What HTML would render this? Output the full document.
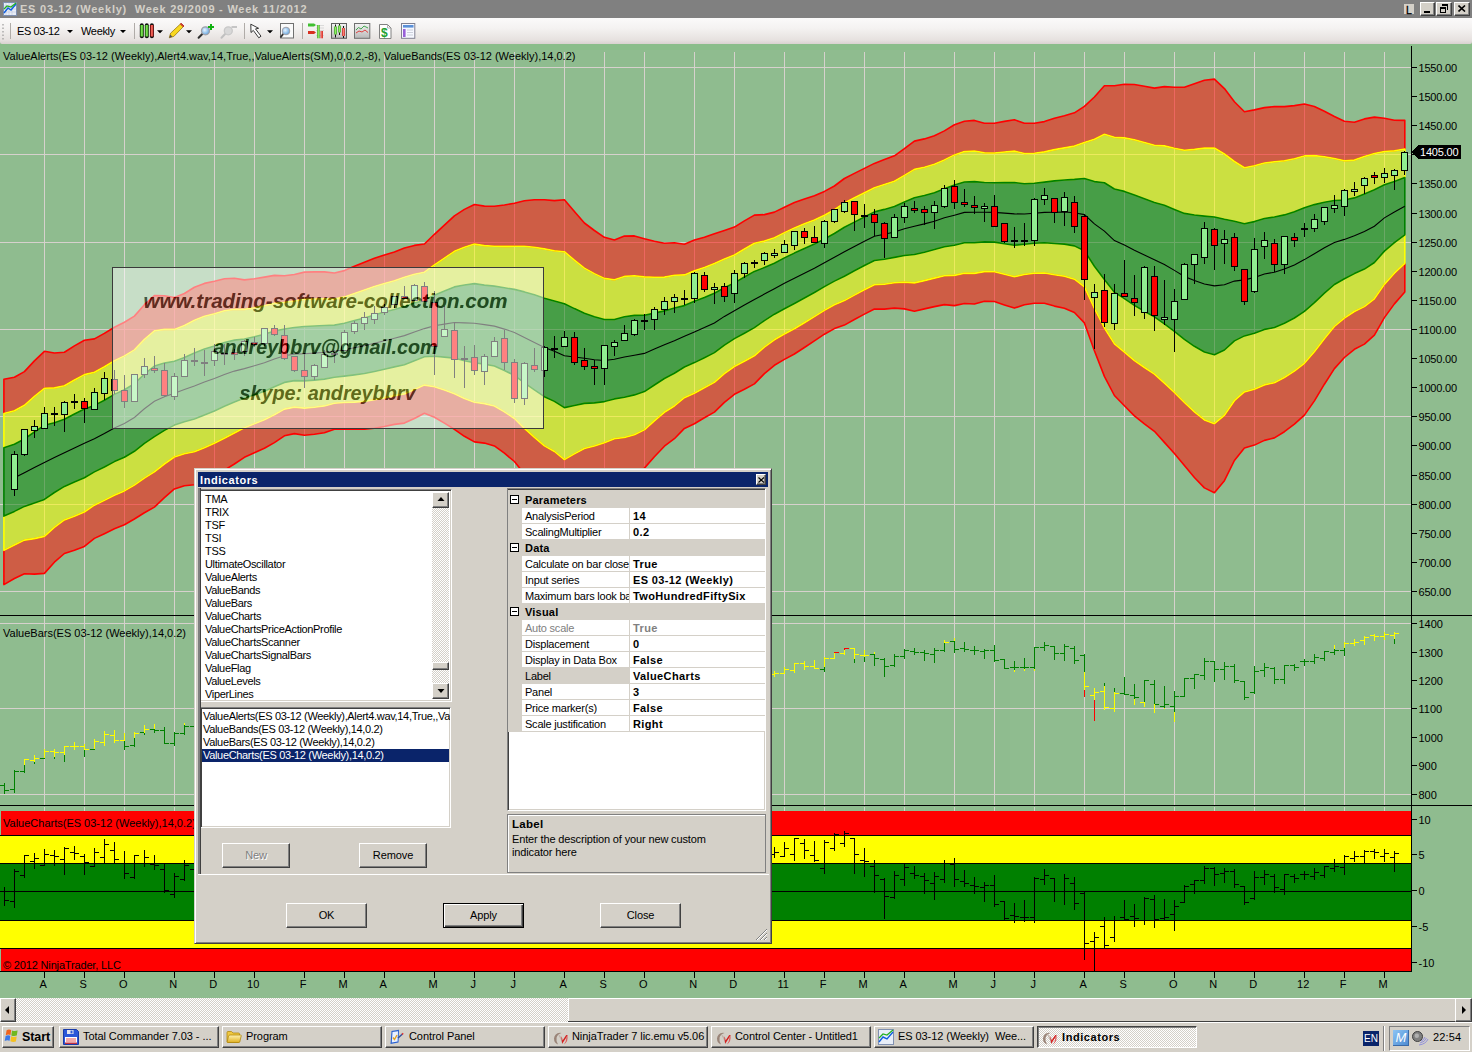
<!DOCTYPE html><html><head><meta charset="utf-8"><style>
*{margin:0;padding:0;box-sizing:border-box}
html,body{width:1472px;height:1052px;overflow:hidden;background:#8FBC8F;font-family:"Liberation Sans",sans-serif;font-size:11px;color:#000}
.a{position:absolute}
#title{left:0;top:0;width:1472px;height:18px;background:#808080}
#title .t{left:20px;top:2px;font-weight:bold;font-size:11px;line-height:14px;color:#D4D0C8;white-space:nowrap;letter-spacing:0.77px}
.cb{background:#D4D0C8;border-top:1px solid #fff;border-left:1px solid #fff;border-right:1px solid #404040;border-bottom:1px solid #404040;box-shadow:inset -1px -1px #808080}
#tb{left:0;top:18px;width:1472px;height:26px;background:linear-gradient(#fbfafa,#f4f2f1 40%,#e6e1df 85%,#d8d2cf);border-radius:0 0 2px 2px}
#sb{left:0;top:998px;width:1472px;height:24px;background-color:#eeece8;background-image:repeating-conic-gradient(#D4D0C8 0 25%,#fff 0 50%);background-size:2px 2px}
#task{left:0;top:1022px;width:1472px;height:30px;background:#D4D0C8;border-top:1px solid #fff}
.tbtn{top:3px;height:22px;background:#D4D0C8;border-top:1px solid #fff;border-left:1px solid #fff;border-right:1px solid #404040;border-bottom:1px solid #404040;box-shadow:inset -1px -1px #808080;white-space:nowrap;font-size:11px;padding:3px 0 0 23px;overflow:hidden;letter-spacing:-0.07px}
.tbtn.on{background-color:#eeece8;background-image:repeating-conic-gradient(#D4D0C8 0 25%,#fff 0 50%);background-size:2px 2px;border-top:1px solid #404040;border-left:1px solid #404040;border-right:1px solid #fff;border-bottom:1px solid #fff;box-shadow:inset 1px 1px #808080;font-weight:bold;letter-spacing:0.57px;padding-top:4px;padding-left:24px}
#dlg{left:194px;top:468px;width:578px;height:476px;background:#D4D0C8;border-top:1px solid #D4D0C8;border-left:1px solid #D4D0C8;border-right:1px solid #404040;border-bottom:1px solid #404040;box-shadow:inset 1px 1px #fff,inset -1px -1px #808080}
.sunk{border-top:1px solid #808080;border-left:1px solid #808080;border-right:1px solid #fff;border-bottom:1px solid #fff;box-shadow:inset 1px 1px #404040,inset -1px -1px #D4D0C8}
.btn{background:#D4D0C8;border-top:1px solid #fff;border-left:1px solid #fff;border-right:1px solid #404040;border-bottom:1px solid #404040;box-shadow:inset -1px -1px #808080;text-align:center;font-size:11px;line-height:22px;letter-spacing:-0.1px}
.li{position:absolute;left:4px;white-space:nowrap;font-size:11px;line-height:13px;height:13px;letter-spacing:-0.33px}
.pr{position:absolute;left:0;width:258px;height:16px;font-size:11px;line-height:16px;white-space:nowrap;letter-spacing:-0.22px}
.pr b{letter-spacing:0.2px}
</style></head><body><svg width="1472" height="1052" viewBox="0 0 1472 1052" style="position:absolute;left:0;top:0" shape-rendering="crispEdges"><defs><mask id="wm"><rect x="0" y="0" width="1472" height="1052" fill="white"/><g font-family="Liberation Sans" font-weight="bold" font-style="italic" fill="black"><text x="143.5" y="308" font-size="19.5" textLength="364" lengthAdjust="spacingAndGlyphs">www.trading-software-collection.com</text><text x="213.5" y="353.5" font-size="19.5" textLength="224" lengthAdjust="spacingAndGlyphs">andreybbrv@gmail.com</text><text x="239.5" y="399.5" font-size="19.5" textLength="176" lengthAdjust="spacingAndGlyphs">skype: andreybbrv</text></g></mask></defs><rect x="0" y="44" width="1472" height="954" fill="#8FBC8F"/><rect x="0" y="44" width="1472" height="6" fill="#8ABD8A"/><path d="M44.9 52V805M44.9 807V811M84.9 52V805M84.9 807V811M124.9 52V805M124.9 807V811M174.9 52V805M174.9 807V811M214.9 52V805M214.9 807V811M254.9 52V805M254.9 807V811M304.9 52V805M304.9 807V811M344.9 52V805M344.9 807V811M384.9 52V805M384.9 807V811M434.9 52V805M434.9 807V811M474.9 52V805M474.9 807V811M514.9 52V805M514.9 807V811M564.9 52V805M564.9 807V811M604.9 52V805M604.9 807V811M644.9 52V805M644.9 807V811M694.9 52V805M694.9 807V811M734.9 52V805M734.9 807V811M784.9 52V805M784.9 807V811M824.9 52V805M824.9 807V811M864.9 52V805M864.9 807V811M904.9 52V805M904.9 807V811M954.9 52V805M954.9 807V811M994.9 52V805M994.9 807V811M1034.9 52V805M1034.9 807V811M1084.9 52V805M1084.9 807V811M1124.9 52V805M1124.9 807V811M1174.9 52V805M1174.9 807V811M1214.9 52V805M1214.9 807V811M1254.9 52V805M1254.9 807V811M1304.9 52V805M1304.9 807V811M1344.9 52V805M1344.9 807V811M1384.9 52V805M1384.9 807V811M0 591.5H1411M0 504.5H1411M0 416.5H1411M0 329.5H1411M0 242.5H1411M0 154.5H1411M0 67.5H1411M0 623.5H1411M0 708.5H1411M0 794.5H1411" stroke="#D6D1CD" stroke-width="1" fill="none"/><g shape-rendering="geometricPrecision"><polygon points="3.9,379.2 14.4,377.2 24.4,371.6 34.4,360.9 44.4,351.3 54.4,353 64.4,352.2 74.4,345.9 84.4,340.3 94.4,338.9 104.4,333.4 114.4,327.2 124.4,322.2 134.4,316.1 144.4,304.7 154.4,295.5 164.4,295.8 174.4,297.5 184.4,293.5 194.4,287.3 204.4,283.4 214.4,281.3 224.4,278.8 234.4,278.2 244.4,279.9 254.4,278.8 264.4,277.1 274.4,275.4 284.4,275.7 294.4,274.5 304.4,272.1 314.4,271.9 324.4,271.9 334.4,273 344.4,270.6 354.4,266.2 364.4,262.2 374.4,258.3 384.4,254.9 394.4,251.9 404.4,248 414.4,245.4 424.4,244 434.4,234.3 444.4,225.1 454.4,215.8 464.4,209.4 474.4,204.5 484.4,206.1 494.4,206.2 504.4,205 514.4,203.3 524.4,200.8 534.4,199.8 544.4,199.7 554.4,200.6 564.4,199.7 574.4,211.6 584.4,223 594.4,230.5 604.4,237.3 614.4,240 624.4,236.1 634.4,235.9 644.4,238.7 654.4,241.2 664.4,243.2 674.4,242.7 684.4,244.2 694.4,240.1 704.4,237.3 714.4,233.7 724.4,230.4 734.4,227.1 744.4,220.9 754.4,215.1 764.4,214.6 774.4,212.1 784.4,207.2 794.4,202.6 804.4,199.1 814.4,195.8 824.4,191.4 834.4,186 844.4,178.5 854.4,173.4 864.4,168.4 874.4,163.4 884.4,159.6 894.4,155.8 904.4,148.7 914.4,141.1 924.4,138.9 934.4,135.7 944.4,130.9 954.4,124.8 964.4,121.2 974.4,120.4 984.4,123.2 994.4,123.3 1004.4,121.4 1014.4,119.7 1024.4,123.3 1034.4,123.3 1044.4,121.6 1054.4,118.3 1064.4,115.8 1074.4,112.8 1084.4,106.3 1094.4,97 1104.4,85.8 1114.4,85.7 1124.4,84.3 1134.4,84.5 1144.4,86.2 1154.4,88.1 1164.4,86.6 1174.4,87.3 1184.4,87.3 1194.4,83.8 1204.4,80.2 1214.4,79.1 1224.4,88.6 1234.4,101.7 1244.4,111.8 1254.4,109.9 1264.4,107.6 1274.4,106.6 1284.4,106.6 1294.4,105.6 1304.4,104 1314.4,106.5 1324.4,111.2 1334.4,116.5 1344.4,121.3 1354.4,122.2 1364.4,118.9 1374.4,117.1 1384.4,118.3 1394.4,120.2 1404.8,120.4 1404.8,149 1394.4,150.8 1384.4,151.5 1374.4,153.5 1364.4,156.5 1354.4,160.1 1344.4,160.7 1334.4,158.5 1324.4,156.7 1314.4,155.6 1304.4,155.9 1294.4,158.7 1284.4,160.8 1274.4,161.8 1264.4,163 1254.4,165.7 1244.4,167.8 1234.4,161.5 1224.4,154 1214.4,148 1204.4,148.1 1194.4,149.4 1184.4,150.3 1174.4,148.3 1164.4,145.9 1154.4,145.3 1144.4,142.5 1134.4,139.7 1124.4,137.9 1114.4,137.3 1104.4,134.3 1094.4,139.3 1084.4,142.4 1074.4,146.1 1064.4,147.9 1054.4,149.6 1044.4,151.9 1034.4,153.3 1024.4,153.5 1014.4,151.1 1004.4,152 994.4,153 984.4,152.8 974.4,151 964.4,151.6 954.4,154.9 944.4,159.9 934.4,164.2 924.4,167.2 914.4,169.4 904.4,175.4 894.4,181.2 884.4,184.5 874.4,187.7 864.4,192.7 854.4,197.7 844.4,202.9 834.4,209.7 824.4,215.2 814.4,220 804.4,223.8 794.4,227.9 784.4,232.6 774.4,237.7 764.4,241.1 754.4,243.2 744.4,249 734.4,255 724.4,259.1 714.4,263.4 704.4,267.4 694.4,270.7 684.4,274.9 674.4,275.3 664.4,277.1 654.4,277.2 644.4,276.9 634.4,275.7 624.4,276.4 614.4,279.7 604.4,278.4 594.4,273.6 584.4,268.1 574.4,260.1 564.4,251.7 554.4,250.8 544.4,248.9 534.4,247.3 524.4,246.3 514.4,246.3 504.4,246.4 494.4,246.2 484.4,245.6 474.4,244.1 464.4,247.2 454.4,251.3 444.4,258.1 434.4,264.8 424.4,272.2 414.4,274.3 404.4,277.2 394.4,280.7 384.4,283.5 374.4,286.6 364.4,290 354.4,293.4 344.4,296.9 334.4,299.1 324.4,298.7 314.4,299 304.4,299.3 294.4,301 284.4,302.3 274.4,303.2 264.4,305.7 254.4,307.8 244.4,309.4 234.4,309.2 224.4,310.7 214.4,313.7 204.4,316.3 194.4,320.2 184.4,325.5 174.4,329.4 164.4,329.4 154.4,330.8 144.4,339.4 134.4,349.9 124.4,355.9 114.4,360.8 104.4,366.8 94.4,372.2 84.4,374.6 74.4,380 64.4,385.8 54.4,387.9 44.4,388.3 34.4,396.4 24.4,405.3 14.4,410.7 3.9,413.4" fill="rgba(255,20,10,0.56)" stroke="#FF0000" stroke-width="1.6" stroke-linejoin="round"/><polygon points="3.9,550.4 14.4,545 24.4,540.1 34.4,538.6 44.4,536.4 54.4,527.4 64.4,519.9 74.4,516.2 84.4,512 94.4,505.2 104.4,500.4 114.4,495.2 124.4,490.9 134.4,485.1 144.4,478.1 154.4,471.9 164.4,464 174.4,457 184.4,453.7 194.4,451.8 204.4,447.8 214.4,443.3 224.4,438.2 234.4,433 244.4,427.7 254.4,423.7 264.4,419.8 274.4,414.7 284.4,409.1 294.4,407.1 304.4,408.1 314.4,407.2 324.4,405.9 334.4,403.3 344.4,402.5 354.4,402.1 364.4,401.4 374.4,399.8 384.4,397.9 394.4,395.6 404.4,393.9 414.4,389.6 424.4,385.1 434.4,386.8 444.4,390.1 454.4,393.7 464.4,398.5 474.4,402.3 484.4,403.6 494.4,406 504.4,411.9 514.4,418.5 524.4,428.4 534.4,437.4 544.4,445.9 554.4,451.5 564.4,459.6 574.4,453.9 584.4,448.5 594.4,446 604.4,442.7 614.4,438.7 624.4,437.5 634.4,434.7 644.4,429.9 654.4,420.9 664.4,412.3 674.4,406 684.4,397.7 694.4,393.2 704.4,387.7 714.4,382.4 724.4,373.7 734.4,366.5 744.4,361.3 754.4,355.8 764.4,347.1 774.4,339.8 784.4,334 794.4,328.7 804.4,322.8 814.4,316.6 824.4,310.4 834.4,304.8 844.4,300.6 854.4,295.1 864.4,289.8 874.4,284.7 884.4,284.2 894.4,282.7 904.4,282.2 914.4,282.9 924.4,280.6 934.4,278.1 944.4,275.7 954.4,275.4 964.4,273.2 974.4,273.4 984.4,271.6 994.4,271.8 1004.4,274.3 1014.4,276.7 1024.4,274.5 1034.4,273.3 1044.4,273 1054.4,274.8 1064.4,276.2 1074.4,279.2 1084.4,286.8 1094.4,308.5 1104.4,328 1114.4,343.9 1124.4,352.1 1134.4,360.7 1144.4,367.5 1154.4,374.1 1164.4,383.1 1174.4,392.5 1184.4,402.5 1194.4,411.9 1204.4,419.9 1214.4,423.7 1224.4,415.4 1234.4,400.7 1244.4,391.9 1254.4,389.2 1264.4,384.9 1274.4,382.7 1284.4,377.5 1294.4,371.1 1304.4,363.3 1314.4,351.8 1324.4,338.7 1334.4,326.5 1344.4,318.1 1354.4,311.5 1364.4,306.6 1374.4,298.8 1384.4,284.4 1394.4,273.2 1404.8,263.4 1404.8,292 1394.4,303.9 1384.4,317.6 1374.4,335.2 1364.4,344.1 1354.4,349.3 1344.4,357.5 1334.4,368.6 1324.4,384.2 1314.4,400.9 1304.4,415.1 1294.4,424.2 1284.4,431.7 1274.4,437.9 1264.4,440.4 1254.4,445.1 1244.4,448 1234.4,460.5 1224.4,480.7 1214.4,492.7 1204.4,487.9 1194.4,477.5 1184.4,465.5 1174.4,453.5 1164.4,442.4 1154.4,431.3 1144.4,423.8 1134.4,415.9 1124.4,405.7 1114.4,395.5 1104.4,376.4 1094.4,350.8 1084.4,322.9 1074.4,312.5 1064.4,308.3 1054.4,306.1 1044.4,303.3 1034.4,303.3 1024.4,304.7 1014.4,308.1 1004.4,304.9 994.4,301.5 984.4,301.2 974.4,304 964.4,303.5 954.4,305.6 944.4,304.6 934.4,306.6 924.4,308.9 914.4,311.2 904.4,308.9 894.4,308.1 884.4,309.1 874.4,309 864.4,314.1 854.4,319.5 844.4,325.1 834.4,328.6 824.4,334.2 814.4,340.8 804.4,347.5 794.4,354 784.4,359.4 774.4,365.3 764.4,373.6 754.4,383.9 744.4,389.3 734.4,394.3 724.4,402.4 714.4,412.1 704.4,417.8 694.4,423.8 684.4,428.4 674.4,438.7 664.4,446.2 654.4,456.8 644.4,468.1 634.4,474.5 624.4,477.8 614.4,478.4 604.4,483.8 594.4,489.1 584.4,493.6 574.4,502.4 564.4,511.6 554.4,501.7 544.4,495.2 534.4,485 524.4,473.9 514.4,461.5 504.4,453.2 494.4,445.9 484.4,443.1 474.4,441.9 464.4,436.3 454.4,429.3 444.4,423.1 434.4,417.3 424.4,413.3 414.4,418.5 404.4,423.1 394.4,424.4 384.4,426.5 374.4,428.2 364.4,429.2 354.4,429.2 344.4,428.9 334.4,429.3 324.4,432.8 314.4,434.2 304.4,435.2 294.4,433.6 284.4,435.8 274.4,442.6 264.4,448.3 254.4,452.7 244.4,457.3 234.4,464 224.4,470.1 214.4,475.7 204.4,480.6 194.4,484.7 184.4,485.7 174.4,488.9 164.4,497.7 154.4,507.1 144.4,512.8 134.4,519 124.4,524.7 114.4,528.8 104.4,533.7 94.4,538.4 84.4,546.4 74.4,550.3 64.4,553.5 54.4,562.2 44.4,573.4 34.4,574.1 24.4,573.8 14.4,578.5 3.9,584.6" fill="rgba(255,20,10,0.56)" stroke="#FF0000" stroke-width="1.6" stroke-linejoin="round"/><polygon points="3.9,413.4 14.4,410.7 24.4,405.3 34.4,396.4 44.4,388.3 54.4,387.9 64.4,385.8 74.4,380 84.4,374.6 94.4,372.2 104.4,366.8 114.4,360.8 124.4,355.9 134.4,349.9 144.4,339.4 154.4,330.8 164.4,329.4 174.4,329.4 184.4,325.5 194.4,320.2 204.4,316.3 214.4,313.7 224.4,310.7 234.4,309.2 244.4,309.4 254.4,307.8 264.4,305.7 274.4,303.2 284.4,302.3 294.4,301 304.4,299.3 314.4,299 324.4,298.7 334.4,299.1 344.4,296.9 354.4,293.4 364.4,290 374.4,286.6 384.4,283.5 394.4,280.7 404.4,277.2 414.4,274.3 424.4,272.2 434.4,264.8 444.4,258.1 454.4,251.3 464.4,247.2 474.4,244.1 484.4,245.6 494.4,246.2 504.4,246.4 514.4,246.3 524.4,246.3 534.4,247.3 544.4,248.9 554.4,250.8 564.4,251.7 574.4,260.1 584.4,268.1 594.4,273.6 604.4,278.4 614.4,279.7 624.4,276.4 634.4,275.7 644.4,276.9 654.4,277.2 664.4,277.1 674.4,275.3 684.4,274.9 694.4,270.7 704.4,267.4 714.4,263.4 724.4,259.1 734.4,255 744.4,249 754.4,243.2 764.4,241.1 774.4,237.7 784.4,232.6 794.4,227.9 804.4,223.8 814.4,220 824.4,215.2 834.4,209.7 844.4,202.9 854.4,197.7 864.4,192.7 874.4,187.7 884.4,184.5 894.4,181.2 904.4,175.4 914.4,169.4 924.4,167.2 934.4,164.2 944.4,159.9 954.4,154.9 964.4,151.6 974.4,151 984.4,152.8 994.4,153 1004.4,152 1014.4,151.1 1024.4,153.5 1034.4,153.3 1044.4,151.9 1054.4,149.6 1064.4,147.9 1074.4,146.1 1084.4,142.4 1094.4,139.3 1104.4,134.3 1114.4,137.3 1124.4,137.9 1134.4,139.7 1144.4,142.5 1154.4,145.3 1164.4,145.9 1174.4,148.3 1184.4,150.3 1194.4,149.4 1204.4,148.1 1214.4,148 1224.4,154 1234.4,161.5 1244.4,167.8 1254.4,165.7 1264.4,163 1274.4,161.8 1284.4,160.8 1294.4,158.7 1304.4,155.9 1314.4,155.6 1324.4,156.7 1334.4,158.5 1344.4,160.7 1354.4,160.1 1364.4,156.5 1374.4,153.5 1384.4,151.5 1394.4,150.8 1404.8,149 1404.8,177.6 1394.4,181.4 1384.4,184.7 1374.4,189.8 1364.4,194 1354.4,197.9 1344.4,200 1334.4,200.5 1324.4,202.2 1314.4,204.6 1304.4,207.7 1294.4,211.8 1284.4,214.9 1274.4,217 1264.4,218.5 1254.4,221.6 1244.4,223.8 1234.4,221.3 1224.4,219.3 1214.4,217 1204.4,216.1 1194.4,215 1184.4,213.4 1174.4,209.4 1164.4,205.2 1154.4,202.5 1144.4,198.7 1134.4,195 1124.4,191.4 1114.4,189 1104.4,182.7 1094.4,181.6 1084.4,178.5 1074.4,179.4 1064.4,180 1054.4,180.9 1044.4,182.1 1034.4,183.3 1024.4,183.8 1014.4,182.5 1004.4,182.6 994.4,182.7 984.4,182.5 974.4,181.6 964.4,182 954.4,185 944.4,188.8 934.4,192.7 924.4,195.5 914.4,197.8 904.4,202.1 894.4,206.6 884.4,209.4 874.4,211.9 864.4,217 854.4,222.1 844.4,227.3 834.4,233.5 824.4,239 814.4,244.1 804.4,248.6 794.4,253.1 784.4,257.9 774.4,263.2 764.4,267.6 754.4,271.4 744.4,277 734.4,282.9 724.4,287.7 714.4,293.2 704.4,297.5 694.4,301.3 684.4,305.6 674.4,308 664.4,310.9 654.4,313.1 644.4,315.2 634.4,315.4 624.4,316.7 614.4,319.5 604.4,319.5 594.4,316.7 584.4,313.2 574.4,308.6 564.4,303.7 554.4,301 544.4,298.2 534.4,294.8 524.4,291.9 514.4,289.4 504.4,287.8 494.4,286.1 484.4,285.1 474.4,283.6 464.4,285 454.4,286.9 444.4,291.1 434.4,295.3 424.4,300.4 414.4,303.1 404.4,306.4 394.4,309.4 384.4,312.1 374.4,314.9 364.4,317.9 354.4,320.5 344.4,323.3 334.4,325.1 324.4,325.5 314.4,326 304.4,326.5 294.4,327.5 284.4,329 274.4,331.1 264.4,334.2 254.4,336.8 244.4,339 234.4,340.1 224.4,342.6 214.4,346.1 204.4,349.1 194.4,353.1 184.4,357.6 174.4,361.3 164.4,363.1 154.4,366 144.4,374.1 134.4,383.7 124.4,389.7 114.4,394.4 104.4,400.2 94.4,405.4 84.4,409 74.4,414 64.4,419.3 54.4,422.7 44.4,425.3 34.4,432 24.4,439 14.4,444.3 3.9,447.7" fill="rgba(255,255,0,0.54)" stroke="#FFFF00" stroke-width="1.6" stroke-linejoin="round"/><polygon points="3.9,516.1 14.4,511.4 24.4,506.4 34.4,503 44.4,499.4 54.4,492.5 64.4,486.4 74.4,482.1 84.4,477.7 94.4,471.9 104.4,467 114.4,461.6 124.4,457.2 134.4,451.3 144.4,443.4 154.4,436.6 164.4,430.4 174.4,425.1 184.4,421.7 194.4,418.9 204.4,414.9 214.4,410.9 224.4,406.3 234.4,402.1 244.4,398.1 254.4,394.7 264.4,391.2 274.4,386.8 284.4,382.4 294.4,380.6 304.4,380.9 314.4,380.1 324.4,379.1 334.4,377.2 344.4,376.1 354.4,374.9 364.4,373.5 374.4,371.5 384.4,369.3 394.4,366.9 404.4,364.7 414.4,360.8 424.4,356.8 434.4,356.3 444.4,357.1 454.4,358.1 464.4,360.7 474.4,362.8 484.4,364.1 494.4,366 504.4,370.5 514.4,375.4 524.4,382.9 534.4,389.9 544.4,396.7 554.4,401.4 564.4,407.6 574.4,405.5 584.4,403.4 594.4,402.9 604.4,401.6 614.4,398.9 624.4,397.2 634.4,394.9 644.4,391.6 654.4,385 664.4,378.5 674.4,373.3 684.4,367 694.4,362.6 704.4,357.7 714.4,352.6 724.4,345.1 734.4,338.6 744.4,333.2 754.4,327.6 764.4,320.6 774.4,314.2 784.4,308.7 794.4,303.5 804.4,298 814.4,292.5 824.4,286.6 834.4,281.1 844.4,276.2 854.4,270.8 864.4,265.5 874.4,260.5 884.4,259.2 894.4,257.4 904.4,255.5 914.4,254.5 924.4,252.2 934.4,249.6 944.4,246.7 954.4,245.3 964.4,242.8 974.4,242.8 984.4,241.9 994.4,242.1 1004.4,243.7 1014.4,245.3 1024.4,244.2 1034.4,243.3 1044.4,242.7 1054.4,243.5 1064.4,244.1 1074.4,245.9 1084.4,250.7 1094.4,266.2 1104.4,279.6 1114.4,292.2 1124.4,298.6 1134.4,305.4 1144.4,311.3 1154.4,316.9 1164.4,323.8 1174.4,331.4 1184.4,339.4 1194.4,346.3 1204.4,352 1214.4,354.8 1224.4,350 1234.4,340.9 1244.4,335.9 1254.4,333.3 1264.4,329.4 1274.4,327.5 1284.4,323.3 1294.4,318 1304.4,311.4 1314.4,302.7 1324.4,293.2 1334.4,284.5 1344.4,278.7 1354.4,273.6 1364.4,269.1 1374.4,262.5 1384.4,251.1 1394.4,242.6 1404.8,234.8 1404.8,263.4 1394.4,273.2 1384.4,284.4 1374.4,298.8 1364.4,306.6 1354.4,311.5 1344.4,318.1 1334.4,326.5 1324.4,338.7 1314.4,351.8 1304.4,363.3 1294.4,371.1 1284.4,377.5 1274.4,382.7 1264.4,384.9 1254.4,389.2 1244.4,391.9 1234.4,400.7 1224.4,415.4 1214.4,423.7 1204.4,419.9 1194.4,411.9 1184.4,402.5 1174.4,392.5 1164.4,383.1 1154.4,374.1 1144.4,367.5 1134.4,360.7 1124.4,352.1 1114.4,343.9 1104.4,328 1094.4,308.5 1084.4,286.8 1074.4,279.2 1064.4,276.2 1054.4,274.8 1044.4,273 1034.4,273.3 1024.4,274.5 1014.4,276.7 1004.4,274.3 994.4,271.8 984.4,271.6 974.4,273.4 964.4,273.2 954.4,275.4 944.4,275.7 934.4,278.1 924.4,280.6 914.4,282.9 904.4,282.2 894.4,282.7 884.4,284.2 874.4,284.7 864.4,289.8 854.4,295.1 844.4,300.6 834.4,304.8 824.4,310.4 814.4,316.6 804.4,322.8 794.4,328.7 784.4,334 774.4,339.8 764.4,347.1 754.4,355.8 744.4,361.3 734.4,366.5 724.4,373.7 714.4,382.4 704.4,387.7 694.4,393.2 684.4,397.7 674.4,406 664.4,412.3 654.4,420.9 644.4,429.9 634.4,434.7 624.4,437.5 614.4,438.7 604.4,442.7 594.4,446 584.4,448.5 574.4,453.9 564.4,459.6 554.4,451.5 544.4,445.9 534.4,437.4 524.4,428.4 514.4,418.5 504.4,411.9 494.4,406 484.4,403.6 474.4,402.3 464.4,398.5 454.4,393.7 444.4,390.1 434.4,386.8 424.4,385.1 414.4,389.6 404.4,393.9 394.4,395.6 384.4,397.9 374.4,399.8 364.4,401.4 354.4,402.1 344.4,402.5 334.4,403.3 324.4,405.9 314.4,407.2 304.4,408.1 294.4,407.1 284.4,409.1 274.4,414.7 264.4,419.8 254.4,423.7 244.4,427.7 234.4,433 224.4,438.2 214.4,443.3 204.4,447.8 194.4,451.8 184.4,453.7 174.4,457 164.4,464 154.4,471.9 144.4,478.1 134.4,485.1 124.4,490.9 114.4,495.2 104.4,500.4 94.4,505.2 84.4,512 74.4,516.2 64.4,519.9 54.4,527.4 44.4,536.4 34.4,538.6 24.4,540.1 14.4,545 3.9,550.4" fill="rgba(255,255,0,0.54)" stroke="#FFFF00" stroke-width="1.6" stroke-linejoin="round"/><polygon points="3.9,447.7 14.4,444.3 24.4,439 34.4,432 44.4,425.3 54.4,422.7 64.4,419.3 74.4,414 84.4,409 94.4,405.4 104.4,400.2 114.4,394.4 124.4,389.7 134.4,383.7 144.4,374.1 154.4,366 164.4,363.1 174.4,361.3 184.4,357.6 194.4,353.1 204.4,349.1 214.4,346.1 224.4,342.6 234.4,340.1 244.4,339 254.4,336.8 264.4,334.2 274.4,331.1 284.4,329 294.4,327.5 304.4,326.5 314.4,326 324.4,325.5 334.4,325.1 344.4,323.3 354.4,320.5 364.4,317.9 374.4,314.9 384.4,312.1 394.4,309.4 404.4,306.4 414.4,303.1 424.4,300.4 434.4,295.3 444.4,291.1 454.4,286.9 464.4,285 474.4,283.6 484.4,285.1 494.4,286.1 504.4,287.8 514.4,289.4 524.4,291.9 534.4,294.8 544.4,298.2 554.4,301 564.4,303.7 574.4,308.6 584.4,313.2 594.4,316.7 604.4,319.5 614.4,319.5 624.4,316.7 634.4,315.4 644.4,315.2 654.4,313.1 664.4,310.9 674.4,308 684.4,305.6 694.4,301.3 704.4,297.5 714.4,293.2 724.4,287.7 734.4,282.9 744.4,277 754.4,271.4 764.4,267.6 774.4,263.2 784.4,257.9 794.4,253.1 804.4,248.6 814.4,244.1 824.4,239 834.4,233.5 844.4,227.3 854.4,222.1 864.4,217 874.4,211.9 884.4,209.4 894.4,206.6 904.4,202.1 914.4,197.8 924.4,195.5 934.4,192.7 944.4,188.8 954.4,185 964.4,182 974.4,181.6 984.4,182.5 994.4,182.7 1004.4,182.6 1014.4,182.5 1024.4,183.8 1034.4,183.3 1044.4,182.1 1054.4,180.9 1064.4,180 1074.4,179.4 1084.4,178.5 1094.4,181.6 1104.4,182.7 1114.4,189 1124.4,191.4 1134.4,195 1144.4,198.7 1154.4,202.5 1164.4,205.2 1174.4,209.4 1184.4,213.4 1194.4,215 1204.4,216.1 1214.4,217 1224.4,219.3 1234.4,221.3 1244.4,223.8 1254.4,221.6 1264.4,218.5 1274.4,217 1284.4,214.9 1294.4,211.8 1304.4,207.7 1314.4,204.6 1324.4,202.2 1334.4,200.5 1344.4,200 1354.4,197.9 1364.4,194 1374.4,189.8 1384.4,184.7 1394.4,181.4 1404.8,177.6 1404.8,234.8 1394.4,242.6 1384.4,251.1 1374.4,262.5 1364.4,269.1 1354.4,273.6 1344.4,278.7 1334.4,284.5 1324.4,293.2 1314.4,302.7 1304.4,311.4 1294.4,318 1284.4,323.3 1274.4,327.5 1264.4,329.4 1254.4,333.3 1244.4,335.9 1234.4,340.9 1224.4,350 1214.4,354.8 1204.4,352 1194.4,346.3 1184.4,339.4 1174.4,331.4 1164.4,323.8 1154.4,316.9 1144.4,311.3 1134.4,305.4 1124.4,298.6 1114.4,292.2 1104.4,279.6 1094.4,266.2 1084.4,250.7 1074.4,245.9 1064.4,244.1 1054.4,243.5 1044.4,242.7 1034.4,243.3 1024.4,244.2 1014.4,245.3 1004.4,243.7 994.4,242.1 984.4,241.9 974.4,242.8 964.4,242.8 954.4,245.3 944.4,246.7 934.4,249.6 924.4,252.2 914.4,254.5 904.4,255.5 894.4,257.4 884.4,259.2 874.4,260.5 864.4,265.5 854.4,270.8 844.4,276.2 834.4,281.1 824.4,286.6 814.4,292.5 804.4,298 794.4,303.5 784.4,308.7 774.4,314.2 764.4,320.6 754.4,327.6 744.4,333.2 734.4,338.6 724.4,345.1 714.4,352.6 704.4,357.7 694.4,362.6 684.4,367 674.4,373.3 664.4,378.5 654.4,385 644.4,391.6 634.4,394.9 624.4,397.2 614.4,398.9 604.4,401.6 594.4,402.9 584.4,403.4 574.4,405.5 564.4,407.6 554.4,401.4 544.4,396.7 534.4,389.9 524.4,382.9 514.4,375.4 504.4,370.5 494.4,366 484.4,364.1 474.4,362.8 464.4,360.7 454.4,358.1 444.4,357.1 434.4,356.3 424.4,356.8 414.4,360.8 404.4,364.7 394.4,366.9 384.4,369.3 374.4,371.5 364.4,373.5 354.4,374.9 344.4,376.1 334.4,377.2 324.4,379.1 314.4,380.1 304.4,380.9 294.4,380.6 284.4,382.4 274.4,386.8 264.4,391.2 254.4,394.7 244.4,398.1 234.4,402.1 224.4,406.3 214.4,410.9 204.4,414.9 194.4,418.9 184.4,421.7 174.4,425.1 164.4,430.4 154.4,436.6 144.4,443.4 134.4,451.3 124.4,457.2 114.4,461.6 104.4,467 94.4,471.9 84.4,477.7 74.4,482.1 64.4,486.4 54.4,492.5 44.4,499.4 34.4,503 24.4,506.4 14.4,511.4 3.9,516.1" fill="rgba(0,128,0,0.5)" stroke="#008000" stroke-width="1.6" stroke-linejoin="round"/><polyline points="14.4,477.8 24.4,472.7 34.4,467.5 44.4,462.4 54.4,457.6 64.4,452.8 74.4,448.1 84.4,443.3 94.4,438.7 104.4,433.6 114.4,428 124.4,423.4 134.4,417.5 144.4,408.8 154.4,401.3 164.4,396.7 174.4,393.2 184.4,389.6 194.4,386 204.4,382 214.4,378.5 224.4,374.5 234.4,371.1 244.4,368.6 254.4,365.7 264.4,362.7 274.4,359 284.4,355.7 294.4,354.1 304.4,353.7 314.4,353.1 324.4,352.3 334.4,351.2 344.4,349.7 354.4,347.7 364.4,345.7 374.4,343.2 384.4,340.7 394.4,338.2 404.4,335.6 414.4,331.9 424.4,328.6 434.4,325.8 444.4,324.1 454.4,322.5 464.4,322.9 474.4,323.2 484.4,324.6 494.4,326.1 504.4,329.1 514.4,332.4 524.4,337.4 534.4,342.4 544.4,347.4 554.4,351.2 564.4,355.7 574.4,357 584.4,358.3 594.4,359.8 604.4,360.5 614.4,359.2 624.4,357 634.4,355.2 644.4,353.4 654.4,349 664.4,344.7 674.4,340.7 684.4,336.3 694.4,332 704.4,327.6 714.4,322.9 724.4,316.4 734.4,310.7 744.4,305.1 754.4,299.5 764.4,294.1 774.4,288.7 784.4,283.3 794.4,278.3 804.4,273.3 814.4,268.3 824.4,262.8 834.4,257.3 844.4,251.8 854.4,246.4 864.4,241.3 874.4,236.2 884.4,234.3 894.4,232 904.4,228.8 914.4,226.2 924.4,223.9 934.4,221.2 944.4,217.8 954.4,215.2 964.4,212.4 974.4,212.2 984.4,212.2 994.4,212.4 1004.4,213.1 1014.4,213.9 1024.4,214 1034.4,213.3 1044.4,212.4 1054.4,212.2 1064.4,212 1074.4,212.7 1084.4,214.6 1094.4,223.9 1104.4,231.1 1114.4,240.6 1124.4,245 1134.4,250.2 1144.4,255 1154.4,259.7 1164.4,264.5 1174.4,270.4 1184.4,276.4 1194.4,280.6 1204.4,284 1214.4,285.9 1224.4,284.7 1234.4,281.1 1244.4,279.9 1254.4,277.5 1264.4,274 1274.4,272.2 1284.4,269.1 1294.4,264.9 1304.4,259.6 1314.4,253.7 1324.4,247.7 1334.4,242.5 1344.4,239.4 1354.4,235.8 1364.4,231.5 1374.4,226.2 1384.4,217.9 1394.4,212 1404.8,206.2" fill="none" stroke="#000" stroke-width="1.1"/></g><path d="M14.5 451V496M24.5 429V456M34.5 420V438M44.5 407V428M54.5 407V426M64.5 401V432M74.5 394V409M84.5 398V423M94.5 388V409M104.5 372V400M114.5 370V394M124.5 375V408M134.5 374V402M144.5 358V378M154.5 356V373M164.5 363V397M174.5 373V400M184.5 354V377M194.5 348V366M204.5 350V376M214.5 344V366M224.5 344V365M234.5 349V360M244.5 340V356M254.5 337V347M264.5 328V346M274.5 325V336M284.5 325V360M294.5 356V372M304.5 353V388M314.5 364V380M324.5 350V368M334.5 350V363M344.5 330V350M354.5 321V334M364.5 312V330M374.5 306V324M384.5 304V315M394.5 296V308M404.5 286V298M414.5 284V300M424.5 282V301M434.5 291V375M444.5 306V337M454.5 323V378M464.5 346V388M474.5 345V375M484.5 354V385M494.5 337V356M504.5 330V370M514.5 359V403M524.5 362V405M534.5 348V372M544.5 346V377M554.5 336V358M564.5 331V346M574.5 332V365M584.5 348V370M594.5 360V385M604.5 345V385M614.5 340V356M624.5 325V340M634.5 319V336M644.5 314V330M654.5 307V330M664.5 297V315M674.5 294V313M684.5 290V305M694.5 272V303M704.5 272V292M714.5 283V304M724.5 283V302M734.5 270V303M744.5 262V278M754.5 260V268M764.5 252V265M774.5 249V258M784.5 240V252M794.5 231V250M804.5 228V244M814.5 226V243M824.5 220V248M834.5 209V223M844.5 200V213M854.5 201V231M864.5 204V228M874.5 209V236M884.5 222V258M894.5 214V238M904.5 203V223M914.5 201V213M924.5 206V225M934.5 201V229M944.5 185V208M954.5 180V209M964.5 189V207M974.5 196V214M984.5 203V222M994.5 195V227M1004.5 223V243M1014.5 227V248M1024.5 223V246M1034.5 198V246M1044.5 188V205M1054.5 198V223M1064.5 192V226M1074.5 196V233M1084.5 214V300M1094.5 284V349M1104.5 274V327M1114.5 284V330M1124.5 260V296M1134.5 275V316M1144.5 266V319M1154.5 266V331M1164.5 280V325M1174.5 289V352M1184.5 263V299M1194.5 254V284M1204.5 222V264M1214.5 228V270M1224.5 230V264M1234.5 233V271M1244.5 269V305M1254.5 238V293M1264.5 232V259M1274.5 239V272M1284.5 236V274M1294.5 233V247M1304.5 223V237M1314.5 214V232M1324.5 207V225M1334.5 195V213M1344.5 189V216M1354.5 182V196M1364.5 177V194M1374.5 172V184M1384.5 168V183M1394.5 169V190M1404.5 151V175" stroke="#000" stroke-width="1" fill="none"/><rect x="11.5" y="454.5" width="6" height="35" fill="#90EE90" stroke="#000" stroke-width="1"/><rect x="21.5" y="429.5" width="6" height="25" fill="#90EE90" stroke="#000" stroke-width="1"/><rect x="31.5" y="426.5" width="6" height="4" fill="#90EE90" stroke="#000" stroke-width="1"/><rect x="41.5" y="413.5" width="6" height="15" fill="#90EE90" stroke="#000" stroke-width="1"/><path d="M51 413.5H58" stroke="#000" stroke-width="2"/><rect x="61.5" y="402.5" width="6" height="12" fill="#90EE90" stroke="#000" stroke-width="1"/><path d="M71 401.5H78" stroke="#000" stroke-width="2"/><rect x="81.5" y="401.5" width="6" height="7" fill="#FF0000" stroke="#000" stroke-width="1"/><rect x="91.5" y="392.5" width="6" height="17" fill="#90EE90" stroke="#000" stroke-width="1"/><rect x="101.5" y="378.5" width="6" height="15" fill="#90EE90" stroke="#000" stroke-width="1"/><rect x="111.5" y="379.5" width="6" height="11" fill="#FF0000" stroke="#000" stroke-width="1"/><rect x="121.5" y="390.5" width="6" height="11" fill="#FF0000" stroke="#000" stroke-width="1"/><rect x="131.5" y="374.5" width="6" height="27" fill="#90EE90" stroke="#000" stroke-width="1"/><rect x="141.5" y="366.5" width="6" height="8" fill="#90EE90" stroke="#000" stroke-width="1"/><rect x="151.5" y="368.5" width="6" height="2" fill="#FF0000" stroke="#000" stroke-width="1"/><rect x="161.5" y="370.5" width="6" height="25" fill="#FF0000" stroke="#000" stroke-width="1"/><rect x="171.5" y="376.5" width="6" height="20" fill="#90EE90" stroke="#000" stroke-width="1"/><rect x="181.5" y="360.5" width="6" height="16" fill="#90EE90" stroke="#000" stroke-width="1"/><path d="M191 360.5H198" stroke="#000" stroke-width="2"/><path d="M201 362.5H208" stroke="#000" stroke-width="2"/><rect x="211.5" y="351.5" width="6" height="9" fill="#90EE90" stroke="#000" stroke-width="1"/><path d="M221 353.5H228" stroke="#000" stroke-width="2"/><rect x="231.5" y="352.5" width="6" height="2" fill="#FF0000" stroke="#000" stroke-width="1"/><rect x="241.5" y="341.5" width="6" height="10" fill="#90EE90" stroke="#000" stroke-width="1"/><rect x="251.5" y="342.5" width="6" height="2" fill="#FF0000" stroke="#000" stroke-width="1"/><rect x="261.5" y="328.5" width="6" height="15" fill="#90EE90" stroke="#000" stroke-width="1"/><rect x="271.5" y="328.5" width="6" height="6" fill="#FF0000" stroke="#000" stroke-width="1"/><rect x="281.5" y="335.5" width="6" height="23" fill="#FF0000" stroke="#000" stroke-width="1"/><rect x="291.5" y="356.5" width="6" height="14" fill="#FF0000" stroke="#000" stroke-width="1"/><rect x="301.5" y="370.5" width="6" height="6" fill="#FF0000" stroke="#000" stroke-width="1"/><rect x="311.5" y="365.5" width="6" height="11" fill="#90EE90" stroke="#000" stroke-width="1"/><rect x="321.5" y="354.5" width="6" height="13" fill="#90EE90" stroke="#000" stroke-width="1"/><path d="M331 353.5H338" stroke="#000" stroke-width="2"/><rect x="341.5" y="332.5" width="6" height="18" fill="#90EE90" stroke="#000" stroke-width="1"/><rect x="351.5" y="323.5" width="6" height="8" fill="#90EE90" stroke="#000" stroke-width="1"/><rect x="361.5" y="317.5" width="6" height="6" fill="#90EE90" stroke="#000" stroke-width="1"/><rect x="371.5" y="313.5" width="6" height="6" fill="#90EE90" stroke="#000" stroke-width="1"/><rect x="381.5" y="307.5" width="6" height="5" fill="#90EE90" stroke="#000" stroke-width="1"/><rect x="391.5" y="296.5" width="6" height="8" fill="#90EE90" stroke="#000" stroke-width="1"/><rect x="401.5" y="296.5" width="6" height="2" fill="#FF0000" stroke="#000" stroke-width="1"/><rect x="411.5" y="285.5" width="6" height="15" fill="#90EE90" stroke="#000" stroke-width="1"/><rect x="421.5" y="286.5" width="6" height="15" fill="#FF0000" stroke="#000" stroke-width="1"/><rect x="431.5" y="302.5" width="6" height="44" fill="#FF0000" stroke="#000" stroke-width="1"/><rect x="441.5" y="329.5" width="6" height="7" fill="#90EE90" stroke="#000" stroke-width="1"/><rect x="451.5" y="330.5" width="6" height="29" fill="#FF0000" stroke="#000" stroke-width="1"/><path d="M461 358.5H468" stroke="#000" stroke-width="2"/><rect x="471.5" y="357.5" width="6" height="13" fill="#FF0000" stroke="#000" stroke-width="1"/><rect x="481.5" y="356.5" width="6" height="15" fill="#90EE90" stroke="#000" stroke-width="1"/><rect x="491.5" y="341.5" width="6" height="15" fill="#90EE90" stroke="#000" stroke-width="1"/><rect x="501.5" y="338.5" width="6" height="24" fill="#FF0000" stroke="#000" stroke-width="1"/><rect x="511.5" y="362.5" width="6" height="36" fill="#FF0000" stroke="#000" stroke-width="1"/><rect x="521.5" y="363.5" width="6" height="35" fill="#90EE90" stroke="#000" stroke-width="1"/><rect x="531.5" y="365.5" width="6" height="4" fill="#FF0000" stroke="#000" stroke-width="1"/><rect x="541.5" y="347.5" width="6" height="23" fill="#90EE90" stroke="#000" stroke-width="1"/><path d="M551 348.5H558" stroke="#000" stroke-width="2"/><rect x="561.5" y="337.5" width="6" height="9" fill="#90EE90" stroke="#000" stroke-width="1"/><rect x="571.5" y="337.5" width="6" height="25" fill="#FF0000" stroke="#000" stroke-width="1"/><rect x="581.5" y="360.5" width="6" height="6" fill="#FF0000" stroke="#000" stroke-width="1"/><rect x="591.5" y="366.5" width="6" height="2" fill="#FF0000" stroke="#000" stroke-width="1"/><rect x="601.5" y="345.5" width="6" height="23" fill="#90EE90" stroke="#000" stroke-width="1"/><rect x="611.5" y="342.5" width="6" height="4" fill="#90EE90" stroke="#000" stroke-width="1"/><rect x="621.5" y="333.5" width="6" height="7" fill="#90EE90" stroke="#000" stroke-width="1"/><rect x="631.5" y="320.5" width="6" height="14" fill="#90EE90" stroke="#000" stroke-width="1"/><path d="M641 320.5H648" stroke="#000" stroke-width="2"/><rect x="651.5" y="309.5" width="6" height="10" fill="#90EE90" stroke="#000" stroke-width="1"/><rect x="661.5" y="301.5" width="6" height="8" fill="#90EE90" stroke="#000" stroke-width="1"/><rect x="671.5" y="297.5" width="6" height="4" fill="#90EE90" stroke="#000" stroke-width="1"/><path d="M681 298.5H688" stroke="#000" stroke-width="2"/><rect x="691.5" y="273.5" width="6" height="25" fill="#90EE90" stroke="#000" stroke-width="1"/><rect x="701.5" y="275.5" width="6" height="14" fill="#FF0000" stroke="#000" stroke-width="1"/><rect x="711.5" y="287.5" width="6" height="2" fill="#90EE90" stroke="#000" stroke-width="1"/><rect x="721.5" y="286.5" width="6" height="10" fill="#FF0000" stroke="#000" stroke-width="1"/><rect x="731.5" y="273.5" width="6" height="20" fill="#90EE90" stroke="#000" stroke-width="1"/><rect x="741.5" y="263.5" width="6" height="10" fill="#90EE90" stroke="#000" stroke-width="1"/><path d="M751 262.5H758" stroke="#000" stroke-width="2"/><rect x="761.5" y="253.5" width="6" height="7" fill="#90EE90" stroke="#000" stroke-width="1"/><rect x="771.5" y="253.5" width="6" height="2" fill="#90EE90" stroke="#000" stroke-width="1"/><rect x="781.5" y="244.5" width="6" height="8" fill="#90EE90" stroke="#000" stroke-width="1"/><rect x="791.5" y="231.5" width="6" height="14" fill="#90EE90" stroke="#000" stroke-width="1"/><rect x="801.5" y="231.5" width="6" height="6" fill="#FF0000" stroke="#000" stroke-width="1"/><rect x="811.5" y="237.5" width="6" height="5" fill="#FF0000" stroke="#000" stroke-width="1"/><rect x="821.5" y="221.5" width="6" height="22" fill="#90EE90" stroke="#000" stroke-width="1"/><rect x="831.5" y="209.5" width="6" height="12" fill="#90EE90" stroke="#000" stroke-width="1"/><rect x="841.5" y="202.5" width="6" height="9" fill="#90EE90" stroke="#000" stroke-width="1"/><rect x="851.5" y="201.5" width="6" height="13" fill="#FF0000" stroke="#000" stroke-width="1"/><path d="M861 215.5H868" stroke="#000" stroke-width="2"/><rect x="871.5" y="214.5" width="6" height="8" fill="#FF0000" stroke="#000" stroke-width="1"/><rect x="881.5" y="223.5" width="6" height="15" fill="#FF0000" stroke="#000" stroke-width="1"/><rect x="891.5" y="217.5" width="6" height="20" fill="#90EE90" stroke="#000" stroke-width="1"/><rect x="901.5" y="206.5" width="6" height="11" fill="#90EE90" stroke="#000" stroke-width="1"/><rect x="911.5" y="208.5" width="6" height="2" fill="#FF0000" stroke="#000" stroke-width="1"/><rect x="921.5" y="209.5" width="6" height="3" fill="#FF0000" stroke="#000" stroke-width="1"/><rect x="931.5" y="205.5" width="6" height="7" fill="#90EE90" stroke="#000" stroke-width="1"/><rect x="941.5" y="188.5" width="6" height="18" fill="#90EE90" stroke="#000" stroke-width="1"/><rect x="951.5" y="186.5" width="6" height="16" fill="#FF0000" stroke="#000" stroke-width="1"/><rect x="961.5" y="202.5" width="6" height="2" fill="#FF0000" stroke="#000" stroke-width="1"/><rect x="971.5" y="205.5" width="6" height="2" fill="#FF0000" stroke="#000" stroke-width="1"/><rect x="981.5" y="206.5" width="6" height="2" fill="#90EE90" stroke="#000" stroke-width="1"/><rect x="991.5" y="206.5" width="6" height="20" fill="#FF0000" stroke="#000" stroke-width="1"/><rect x="1001.5" y="223.5" width="6" height="18" fill="#FF0000" stroke="#000" stroke-width="1"/><path d="M1011 240.5H1018" stroke="#000" stroke-width="2"/><path d="M1021 240.5H1028" stroke="#000" stroke-width="2"/><rect x="1031.5" y="199.5" width="6" height="41" fill="#90EE90" stroke="#000" stroke-width="1"/><rect x="1041.5" y="195.5" width="6" height="4" fill="#90EE90" stroke="#000" stroke-width="1"/><rect x="1051.5" y="198.5" width="6" height="14" fill="#FF0000" stroke="#000" stroke-width="1"/><rect x="1061.5" y="197.5" width="6" height="14" fill="#90EE90" stroke="#000" stroke-width="1"/><rect x="1071.5" y="202.5" width="6" height="24" fill="#FF0000" stroke="#000" stroke-width="1"/><rect x="1081.5" y="216.5" width="6" height="63" fill="#FF0000" stroke="#000" stroke-width="1"/><rect x="1091.5" y="292.5" width="6" height="5" fill="#90EE90" stroke="#000" stroke-width="1"/><rect x="1101.5" y="290.5" width="6" height="32" fill="#FF0000" stroke="#000" stroke-width="1"/><rect x="1111.5" y="293.5" width="6" height="30" fill="#90EE90" stroke="#000" stroke-width="1"/><rect x="1121.5" y="293.5" width="6" height="3" fill="#FF0000" stroke="#000" stroke-width="1"/><rect x="1131.5" y="298.5" width="6" height="4" fill="#FF0000" stroke="#000" stroke-width="1"/><rect x="1141.5" y="267.5" width="6" height="45" fill="#90EE90" stroke="#000" stroke-width="1"/><rect x="1151.5" y="276.5" width="6" height="39" fill="#FF0000" stroke="#000" stroke-width="1"/><rect x="1161.5" y="317.5" width="6" height="2" fill="#90EE90" stroke="#000" stroke-width="1"/><rect x="1171.5" y="301.5" width="6" height="18" fill="#90EE90" stroke="#000" stroke-width="1"/><rect x="1181.5" y="264.5" width="6" height="35" fill="#90EE90" stroke="#000" stroke-width="1"/><rect x="1191.5" y="254.5" width="6" height="10" fill="#90EE90" stroke="#000" stroke-width="1"/><rect x="1201.5" y="228.5" width="6" height="29" fill="#90EE90" stroke="#000" stroke-width="1"/><rect x="1211.5" y="229.5" width="6" height="16" fill="#FF0000" stroke="#000" stroke-width="1"/><rect x="1221.5" y="239.5" width="6" height="4" fill="#90EE90" stroke="#000" stroke-width="1"/><rect x="1231.5" y="237.5" width="6" height="29" fill="#FF0000" stroke="#000" stroke-width="1"/><rect x="1241.5" y="269.5" width="6" height="32" fill="#FF0000" stroke="#000" stroke-width="1"/><rect x="1251.5" y="249.5" width="6" height="42" fill="#90EE90" stroke="#000" stroke-width="1"/><rect x="1261.5" y="240.5" width="6" height="6" fill="#90EE90" stroke="#000" stroke-width="1"/><rect x="1271.5" y="243.5" width="6" height="21" fill="#FF0000" stroke="#000" stroke-width="1"/><rect x="1281.5" y="236.5" width="6" height="28" fill="#90EE90" stroke="#000" stroke-width="1"/><rect x="1291.5" y="237.5" width="6" height="3" fill="#FF0000" stroke="#000" stroke-width="1"/><path d="M1301 228.5H1308" stroke="#000" stroke-width="2"/><rect x="1311.5" y="219.5" width="6" height="9" fill="#90EE90" stroke="#000" stroke-width="1"/><rect x="1321.5" y="207.5" width="6" height="14" fill="#90EE90" stroke="#000" stroke-width="1"/><rect x="1331.5" y="205.5" width="6" height="3" fill="#90EE90" stroke="#000" stroke-width="1"/><rect x="1341.5" y="190.5" width="6" height="16" fill="#90EE90" stroke="#000" stroke-width="1"/><rect x="1351.5" y="189.5" width="6" height="2" fill="#90EE90" stroke="#000" stroke-width="1"/><rect x="1361.5" y="178.5" width="6" height="7" fill="#90EE90" stroke="#000" stroke-width="1"/><rect x="1371.5" y="175.5" width="6" height="2" fill="#FF0000" stroke="#000" stroke-width="1"/><rect x="1381.5" y="173.5" width="6" height="4" fill="#90EE90" stroke="#000" stroke-width="1"/><rect x="1391.5" y="170.5" width="6" height="5" fill="#90EE90" stroke="#000" stroke-width="1"/><rect x="1401.5" y="152.5" width="6" height="18" fill="#90EE90" stroke="#000" stroke-width="1"/><rect x="112.5" y="267.5" width="431" height="160.5" fill="rgba(255,255,255,0.5)" mask="url(#wm)"/><rect x="112.5" y="267.5" width="431" height="160.5" fill="none" stroke="#3a3a3a" stroke-width="1"/><g font-family="Liberation Sans" font-weight="bold" font-style="italic" fill="rgba(0,0,0,0.55)" shape-rendering="geometricPrecision"><text x="143.5" y="308" font-size="19.5" textLength="364" lengthAdjust="spacingAndGlyphs">www.trading-software-collection.com</text><text x="213.5" y="353.5" font-size="19.5" textLength="224" lengthAdjust="spacingAndGlyphs">andreybbrv@gmail.com</text><text x="239.5" y="399.5" font-size="19.5" textLength="176" lengthAdjust="spacingAndGlyphs">skype: andreybbrv</text></g><path d="M4.5 783V794M0 785.5H4M5 790.5H9M14.5 770V793M10 789.5H14M15 771.5H19M24.5 764V773M20 771.5H24M34.5 761V764M44.5 757V759M40 758.5H44M54.5 756V759M64.5 754V762M84.5 749V757M94.5 748V750M90 749.5H94M124.5 740V750M125 746.5H129M134.5 737V747M130 745.5H134M144.5 732V735M140 732.5H144M154.5 728V733M150 729.5H154M155 730.5H159M164.5 727V744M160 730.5H164M165 743.5H169M174.5 732V746M170 743.5H174M175 733.5H179M184.5 724V735M180 733.5H184M185 726.5H189M194.5 722V729M190 726.5H194M195 726.5H199M204.5 721V734M200 727.5H204M205 727.5H209M214.5 719V729M210 726.5H214M215 721.5H219M224.5 718V729M220 722.5H224M225 722.5H229M234.5 720V726M230 722.5H234M235 723.5H239M244.5 716V724M240 721.5H244M245 716.5H249M254.5 714V720M250 717.5H254M255 718.5H259M264.5 713V719M260 717.5H264M274.5 711V715M275 713.5H279M284.5 710V727M280 713.5H284M285 725.5H289M294.5 723V733M290 724.5H294M295 731.5H299M304.5 722V737M300 731.5H304M305 733.5H309M314.5 727V736M310 733.5H314M315 728.5H319M324.5 721V731M320 729.5H324M325 723.5H329M334.5 721V728M330 722.5H334M335 723.5H339M344.5 711V722M340 721.5H344M345 712.5H349M354.5 706V714M350 711.5H354M355 708.5H359M364.5 705V712M360 708.5H364M374.5 703V709M370 706.5H374M384.5 702V704M424.5 696V698M425 696.5H429M434.5 694V725M430 697.5H434M435 718.5H439M444.5 699V715M440 714.5H444M445 710.5H449M454.5 707V726M450 711.5H454M464.5 719V727M460 724.5H464M465 725.5H469M474.5 718V728M470 724.5H474M484.5 723V729M485 724.5H489M494.5 714V725M490 723.5H494M495 716.5H499M504.5 711V731M500 715.5H504M505 727.5H509M514.5 725V734M510 727.5H514M524.5 727V738M525 727.5H529M534.5 720V732M530 728.5H534M535 730.5H539M544.5 719V735M540 730.5H544M545 719.5H549M554.5 714V725M550 719.5H554M555 720.5H559M564.5 711V720M560 718.5H564M565 714.5H569M574.5 712V729M570 714.5H574M575 726.5H579M584.5 720V732M580 726.5H584M585 728.5H589M594.5 725V739M590 728.5H594M595 730.5H599M604.5 718V739M600 730.5H604M605 718.5H609M614.5 716V724M610 718.5H614M615 717.5H619M624.5 709V717M620 715.5H624M625 713.5H629M634.5 706V715M630 713.5H634M635 706.5H639M644.5 704V712M640 706.5H644M645 706.5H649M654.5 703V712M650 706.5H654M664.5 702V704M674.5 700V703M694.5 697V698M714.5 693V699M724.5 690V698M725 694.5H729M734.5 688V698M730 693.5H734M744.5 685V686M824.5 666V672M820 669.5H824M854.5 658V663M864.5 656V662M874.5 653V666M870 654.5H874M875 658.5H879M884.5 658V677M880 659.5H884M885 666.5H889M894.5 654V667M890 665.5H894M895 656.5H899M904.5 649V659M900 656.5H904M905 650.5H909M914.5 648V655M910 651.5H914M915 652.5H919M924.5 650V661M920 652.5H924M925 653.5H929M934.5 648V663M930 654.5H934M935 650.5H939M944.5 642V652M940 650.5H944M954.5 640V653M950 641.5H954M955 649.5H959M964.5 642V652M960 648.5H964M965 649.5H969M974.5 646V655M970 650.5H974M975 650.5H979M984.5 649V659M980 651.5H984M985 650.5H989M994.5 645V662M990 650.5H994M995 660.5H999M1004.5 659V669M1000 659.5H1004M1005 668.5H1009M1014.5 661V671M1010 667.5H1014M1015 667.5H1019M1024.5 658V670M1020 667.5H1024M1025 667.5H1029M1034.5 647V670M1030 667.5H1034M1035 647.5H1039M1044.5 642V651M1040 647.5H1044M1045 645.5H1049M1054.5 646V660M1050 646.5H1054M1055 653.5H1059M1064.5 644V661M1060 653.5H1064M1065 646.5H1069M1074.5 646V664M1070 648.5H1074M1075 660.5H1079M1084.5 654V673M1080 655.5H1084M1104.5 683V687M1114.5 688V693M1124.5 677V695M1120 693.5H1124M1125 694.5H1129M1134.5 684V700M1130 695.5H1134M1135 697.5H1139M1144.5 680V703M1145 680.5H1149M1154.5 680V705M1150 684.5H1154M1155 704.5H1159M1164.5 686V709M1160 706.5H1164M1165 704.5H1169M1174.5 691V713M1170 706.5H1174M1175 696.5H1179M1184.5 678V697M1180 696.5H1184M1185 678.5H1189M1194.5 674V689M1190 678.5H1194M1195 674.5H1199M1204.5 658V680M1200 675.5H1204M1205 661.5H1209M1214.5 661V682M1210 661.5H1214M1215 669.5H1219M1224.5 662V680M1220 669.5H1224M1225 666.5H1229M1234.5 664V683M1230 666.5H1234M1235 680.5H1239M1244.5 681V700M1240 681.5H1244M1245 697.5H1249M1254.5 666V694M1250 692.5H1254M1255 671.5H1259M1264.5 663V677M1260 670.5H1264M1265 667.5H1269M1274.5 667V684M1270 668.5H1274M1275 679.5H1279M1284.5 665V684M1280 679.5H1284M1285 665.5H1289M1294.5 664V671M1290 665.5H1294M1295 667.5H1299M1304.5 659V666M1300 661.5H1304M1305 661.5H1309M1314.5 654V664M1310 661.5H1314M1315 657.5H1319M1324.5 651V661M1320 658.5H1324M1325 651.5H1329M1334.5 648V655M1330 652.5H1334M1335 650.5H1339M1344.5 647V656M1340 650.5H1344M1394.5 638V644" stroke="#008000" stroke-width="1.2" fill="none"/><path d="M24.5 759V765M25 759.5H29M34.5 755V762M30 760.5H34M35 758.5H39M44.5 749V758M45 751.5H49M54.5 749V757M50 751.5H54M55 752.5H59M64.5 746V755M60 752.5H64M65 746.5H69M74.5 742V750M70 746.5H74M75 746.5H79M84.5 744V750M80 746.5H84M85 749.5H89M94.5 739V749M95 741.5H99M104.5 731V746M100 742.5H104M105 734.5H109M114.5 730V743M110 735.5H114M115 740.5H119M124.5 733V741M120 740.5H124M134.5 732V738M135 733.5H139M144.5 725V733M145 729.5H149M154.5 724V729M184.5 723V725M194.5 720V723M214.5 718V720M264.5 710V714M265 710.5H269M274.5 708V712M270 710.5H274M284.5 708V711M304.5 736V740M314.5 735V736M364.5 702V706M365 705.5H369M374.5 699V704M375 703.5H379M384.5 698V703M380 702.5H384M385 700.5H389M394.5 694V701M390 698.5H394M395 694.5H399M404.5 690V696M400 694.5H404M405 695.5H409M414.5 688V697M410 696.5H414M415 689.5H419M424.5 687V697M420 689.5H424M434.5 692V695M434.5 724V734M454.5 725V735M455 725.5H459M464.5 726V740M474.5 727V734M475 731.5H479M484.5 728V739M480 731.5H484M514.5 733V747M515 744.5H519M524.5 737V748M520 744.5H524M644.5 703V705M654.5 700V704M655 701.5H659M664.5 695V703M660 701.5H664M665 697.5H669M674.5 693V701M670 697.5H674M675 695.5H679M684.5 692V700M680 695.5H684M685 695.5H689M694.5 683V698M690 695.5H694M695 683.5H699M704.5 683V693M700 684.5H704M705 691.5H709M714.5 688V694M710 691.5H714M715 690.5H719M724.5 688V691M720 689.5H724M734.5 682V689M735 683.5H739M744.5 678V686M740 683.5H744M745 678.5H749M754.5 676V682M750 678.5H754M755 678.5H759M764.5 673V680M760 677.5H764M765 673.5H769M774.5 671V677M770 674.5H774M775 673.5H779M784.5 667V674M780 673.5H784M785 669.5H789M794.5 663V673M790 670.5H794M795 663.5H799M804.5 661V670M800 663.5H804M805 666.5H809M814.5 660V669M810 666.5H814M815 668.5H819M824.5 657V667M825 658.5H829M834.5 652V659M830 658.5H834M844.5 649V655M840 653.5H844M854.5 648V659M850 648.5H854M855 654.5H859M864.5 650V657M860 655.5H864M865 655.5H869M874.5 652V654M944.5 640V643M945 642.5H949M954.5 638V641M1014.5 670V672M1024.5 669V671M1034.5 669V671M1084.5 672V691M1085 686.5H1089M1094.5 688V701M1090 695.5H1094M1095 692.5H1099M1104.5 686V710M1100 691.5H1104M1105 707.5H1109M1114.5 692V712M1110 708.5H1114M1115 693.5H1119M1134.5 699V705M1144.5 702V707M1140 702.5H1144M1154.5 704V713M1164.5 708V709M1174.5 712V722M1334.5 645V649M1344.5 642V648M1345 643.5H1349M1354.5 639V646M1350 643.5H1354M1355 642.5H1359M1364.5 636V645M1360 640.5H1364M1365 637.5H1369M1374.5 634V641M1370 635.5H1374M1375 636.5H1379M1384.5 632V640M1380 636.5H1384M1385 634.5H1389M1394.5 632V639M1390 635.5H1394M1395 633.5H1399" stroke="#FFFF00" stroke-width="1.2" fill="none"/><path d="M834.5 652V653M835 652.5H839M844.5 648V650M845 648.5H849M1084.5 690V697M1094.5 700V721" stroke="#FF0000" stroke-width="1.2" fill="none"/><rect x="1" y="811" width="1410" height="160" fill="#FF0000"/><rect x="0" y="835.5" width="1411" height="113" fill="#FFFF00"/><rect x="0" y="863" width="1411" height="57.5" fill="#008000"/><path d="M0 835.5H1411M0 863.5H1411M0 891.5H1411M0 920.5H1411M0 948.5H1411M0 971.5H1411" stroke="#000" stroke-width="1"/><path d="M4.5 887V906M0 891.5H4M5 900.5H9M14.5 869V908M10 901.5H14M15 871.5H19M24.5 855V878M20 875.5H24M25 855.5H29M34.5 853V869M30 861.5H34M35 858.5H39M44.5 849V866M40 865.5H44M45 854.5H49M54.5 850V866M50 855.5H54M55 856.5H59M64.5 847V875M60 859.5H64M65 848.5H69M74.5 846V860M70 852.5H74M75 853.5H79M84.5 854V875M80 856.5H84M85 862.5H89M94.5 848V867M90 866.5H94M95 852.5H99M104.5 839V863M100 857.5H104M105 844.5H109M114.5 842V863M110 850.5H114M115 859.5H119M124.5 851V879M120 863.5H124M125 873.5H129M134.5 855V879M130 877.5H134M135 855.5H139M144.5 850V867M140 863.5H144M145 857.5H149M154.5 855V870M150 864.5H154M155 865.5H159M164.5 863V893M160 869.5H164M165 890.5H169M174.5 873V898M170 894.5H174M175 876.5H179M184.5 860V881M180 879.5H184M185 865.5H189M194.5 859V875M190 869.5H194M195 870.5H199M204.5 863V887M200 874.5H204M205 875.5H209M214.5 861V881M210 875.5H214M215 867.5H219M224.5 864V884M220 872.5H224M225 872.5H229M234.5 871V882M230 874.5H234M235 876.5H239M244.5 864V880M240 875.5H244M245 864.5H249M254.5 863V874M250 868.5H254M255 870.5H259M264.5 857V875M260 872.5H264M265 857.5H269M274.5 857V869M270 860.5H274M275 866.5H279M284.5 858V898M280 869.5H284M285 894.5H289M294.5 893V912M290 894.5H294M295 909.5H299M304.5 890V928M300 909.5H304M305 915.5H309M314.5 903V922M310 915.5H314M315 904.5H319M324.5 889V910M320 907.5H324M325 893.5H329M334.5 890V905M330 893.5H334M335 895.5H339M344.5 871V893M340 892.5H344M345 872.5H349M354.5 863V878M350 874.5H354M355 866.5H359M364.5 857V876M360 869.5H364M365 862.5H369M374.5 853V873M370 867.5H374M375 861.5H379M384.5 855V867M380 863.5H384M385 858.5H389M394.5 849V863M390 858.5H394M395 850.5H399M404.5 843V856M400 852.5H404M405 854.5H409M414.5 844V861M410 860.5H414M415 845.5H419M424.5 844V865M420 848.5H424M425 863.5H429M434.5 859V939M430 869.5H434M435 910.5H439M444.5 876V904M440 901.5H444M445 896.5H449M454.5 892V937M450 898.5H454M455 921.5H459M464.5 909V941M460 918.5H464M465 918.5H469M474.5 907V930M470 916.5H474M475 926.5H479M484.5 913V936M480 925.5H484M485 914.5H489M494.5 899V914M490 913.5H494M495 902.5H499M504.5 892V921M500 898.5H504M505 914.5H509M514.5 909V939M510 911.5H514M515 935.5H519M524.5 907V935M520 929.5H524M525 908.5H529M534.5 895V910M530 905.5H534M535 908.5H539M544.5 891V910M540 905.5H544M545 891.5H549M554.5 883V896M550 890.5H554M555 890.5H559M564.5 878V887M560 886.5H564M565 881.5H569M574.5 877V897M570 880.5H574M575 894.5H579M584.5 885V900M580 893.5H584M585 896.5H589M594.5 891V909M590 895.5H594M595 897.5H599M604.5 881V909M600 897.5H604M605 881.5H609M614.5 878V890M610 882.5H614M615 879.5H619M624.5 869V881M620 879.5H624M625 875.5H629M634.5 866V878M630 877.5H634M635 866.5H639M644.5 862V875M640 866.5H644M645 867.5H649M654.5 858V877M650 868.5H654M655 860.5H659M664.5 851V867M660 861.5H664M665 855.5H669M674.5 851V868M670 857.5H674M675 854.5H679M684.5 849V864M680 855.5H684M685 856.5H689M694.5 836V865M690 860.5H694M695 837.5H699M704.5 839V859M700 841.5H704M705 855.5H709M714.5 853V874M710 859.5H714M715 857.5H719M724.5 858V878M720 861.5H724M725 871.5H729M734.5 850V884M730 874.5H734M735 853.5H739M744.5 848V864M740 859.5H744M745 849.5H749M754.5 851V861M750 853.5H754M755 854.5H759M764.5 846V861M760 855.5H764M765 848.5H769M774.5 847V858M770 854.5H774M775 852.5H779M784.5 842V857M780 856.5H784M785 848.5H789M794.5 838V861M790 854.5H794M795 838.5H799M804.5 839V859M800 843.5H804M805 850.5H809M814.5 841V862M810 855.5H814M815 860.5H819M824.5 840V874M820 868.5H824M825 842.5H829M834.5 833V851M830 848.5H834M835 834.5H839M844.5 831V847M840 843.5H844M845 833.5H849M854.5 838V874M850 838.5H854M855 854.5H859M864.5 848V877M860 860.5H864M865 861.5H869M874.5 860V893M870 866.5H874M875 875.5H879M884.5 878V919M880 879.5H884M885 896.5H889M894.5 871V899M890 897.5H894M895 875.5H899M904.5 864V886M900 879.5H904M905 867.5H909M914.5 866V879M910 873.5H914M915 875.5H919M924.5 873V894M920 876.5H924M925 880.5H929M934.5 872V900M930 883.5H934M935 876.5H939M944.5 860V883M940 879.5H944M945 863.5H949M954.5 858V887M950 864.5H954M955 879.5H959M964.5 870V887M960 881.5H964M965 883.5H969M974.5 877V894M970 885.5H974M975 886.5H979M984.5 882V902M980 887.5H984M985 885.5H989M994.5 875V907M990 885.5H994M995 904.5H999M1004.5 901V920M1000 901.5H1004M1005 918.5H1009M1014.5 903V923M1010 915.5H1014M1015 916.5H1019M1024.5 900V922M1020 917.5H1024M1025 917.5H1029M1034.5 877V923M1030 917.5H1034M1035 878.5H1039M1044.5 869V885M1040 879.5H1044M1045 875.5H1049M1054.5 878V902M1050 878.5H1054M1055 891.5H1059M1064.5 874V905M1060 891.5H1064M1065 878.5H1069M1074.5 877V910M1070 883.5H1074M1075 903.5H1079M1084.5 891V960M1080 893.5H1084M1085 943.5H1089M1094.5 932V971M1090 941.5H1094M1095 937.5H1099M1104.5 917V949M1100 926.5H1104M1105 945.5H1109M1114.5 916V942M1110 937.5H1114M1115 920.5H1119M1124.5 900V920M1120 917.5H1124M1125 919.5H1129M1134.5 904V927M1130 916.5H1134M1135 918.5H1139M1144.5 897V925M1140 920.5H1144M1145 898.5H1149M1154.5 895V928M1150 899.5H1154M1155 919.5H1159M1164.5 899V921M1160 918.5H1164M1165 917.5H1169M1174.5 900V931M1170 914.5H1174M1175 906.5H1179M1184.5 885V903M1180 902.5H1184M1185 886.5H1189M1194.5 880V894M1190 884.5H1194M1195 880.5H1199M1204.5 866V884M1200 880.5H1204M1205 868.5H1209M1214.5 867V886M1210 868.5H1214M1215 874.5H1219M1224.5 868V883M1220 873.5H1224M1225 871.5H1229M1234.5 869V888M1230 871.5H1234M1235 884.5H1239M1244.5 886V905M1240 886.5H1244M1245 902.5H1249M1254.5 871V900M1250 898.5H1254M1255 877.5H1259M1264.5 870V885M1260 877.5H1264M1265 874.5H1269M1274.5 874V893M1270 876.5H1274M1275 887.5H1279M1284.5 874V895M1280 889.5H1284M1285 874.5H1289M1294.5 874V883M1290 876.5H1294M1295 878.5H1299M1304.5 871V880M1300 874.5H1304M1305 874.5H1309M1314.5 868V880M1310 876.5H1314M1315 872.5H1319M1324.5 866V878M1320 875.5H1324M1325 866.5H1329M1334.5 859V872M1330 868.5H1334M1335 866.5H1339M1344.5 855V875M1340 867.5H1344M1345 856.5H1349M1354.5 851V862M1350 858.5H1354M1355 856.5H1359M1364.5 850V864M1360 856.5H1364M1365 851.5H1369M1374.5 849V859M1370 851.5H1374M1375 852.5H1379M1384.5 849V862M1380 856.5H1384M1385 853.5H1389M1394.5 851V872M1390 857.5H1394M1395 853.5H1399" stroke="#000" stroke-width="1.2" fill="none"/><path d="M0 615.5H1472M0 805.5H1472" stroke="#000" stroke-width="1"/><path d="M1411.5 46V971.5" stroke="#000" stroke-width="1"/><path d="M1411 591.5H1417M1411 562.5H1417M1411 533.5H1417M1411 504.5H1417M1411 475.5H1417M1411 445.5H1417M1411 416.5H1417M1411 387.5H1417M1411 358.5H1417M1411 329.5H1417M1411 300.5H1417M1411 271.5H1417M1411 242.5H1417M1411 213.5H1417M1411 183.5H1417M1411 154.5H1417M1411 125.5H1417M1411 96.5H1417M1411 67.5H1417M1411 794.5H1417M1411 765.5H1417M1411 737.5H1417M1411 708.5H1417M1411 680.5H1417M1411 652.5H1417M1411 623.5H1417M1411 819.5H1417M1411 854.5H1417M1411 890.5H1417M1411 926.5H1417M1411 962.5H1417M44.5 972V978M84.5 972V978M124.5 972V978M174.5 972V978M214.5 972V978M254.5 972V978M304.5 972V978M344.5 972V978M384.5 972V978M434.5 972V978M474.5 972V978M514.5 972V978M564.5 972V978M604.5 972V978M644.5 972V978M694.5 972V978M734.5 972V978M784.5 972V978M824.5 972V978M864.5 972V978M904.5 972V978M954.5 972V978M994.5 972V978M1034.5 972V978M1084.5 972V978M1124.5 972V978M1174.5 972V978M1214.5 972V978M1254.5 972V978M1304.5 972V978M1344.5 972V978M1384.5 972V978" stroke="#000" stroke-width="1"/><g font-family="Liberation Sans" font-size="11" fill="#000" shape-rendering="geometricPrecision"><text x="1418.5" y="595.5" letter-spacing="-0.2">650.00</text><text x="1418.5" y="566.5" letter-spacing="-0.2">700.00</text><text x="1418.5" y="537.5" letter-spacing="-0.2">750.00</text><text x="1418.5" y="508.5" letter-spacing="-0.2">800.00</text><text x="1418.5" y="479.5" letter-spacing="-0.2">850.00</text><text x="1418.5" y="449.5" letter-spacing="-0.2">900.00</text><text x="1418.5" y="420.5" letter-spacing="-0.2">950.00</text><text x="1418.5" y="391.5" letter-spacing="-0.2">1000.00</text><text x="1418.5" y="362.5" letter-spacing="-0.2">1050.00</text><text x="1418.5" y="333.5" letter-spacing="-0.2">1100.00</text><text x="1418.5" y="304.5" letter-spacing="-0.2">1150.00</text><text x="1418.5" y="275.5" letter-spacing="-0.2">1200.00</text><text x="1418.5" y="246.5" letter-spacing="-0.2">1250.00</text><text x="1418.5" y="217.5" letter-spacing="-0.2">1300.00</text><text x="1418.5" y="187.5" letter-spacing="-0.2">1350.00</text><text x="1418.5" y="158.5" letter-spacing="-0.2">1400.00</text><text x="1418.5" y="129.5" letter-spacing="-0.2">1450.00</text><text x="1418.5" y="100.5" letter-spacing="-0.2">1500.00</text><text x="1418.5" y="71.5" letter-spacing="-0.2">1550.00</text><text x="1418.5" y="798.5">800</text><text x="1418.5" y="769.5">900</text><text x="1418.5" y="741.5">1000</text><text x="1418.5" y="712.5">1100</text><text x="1418.5" y="684.5">1200</text><text x="1418.5" y="656.5">1300</text><text x="1418.5" y="627.5">1400</text><text x="1418.5" y="823.5">10</text><text x="1418.5" y="858.5">5</text><text x="1418.5" y="894.5">0</text><text x="1418.5" y="930.5">-5</text><text x="1418.5" y="966.5">-10</text><text x="43.2" y="987.5" text-anchor="middle">A</text><text x="83.2" y="987.5" text-anchor="middle">S</text><text x="123.2" y="987.5" text-anchor="middle">O</text><text x="173.2" y="987.5" text-anchor="middle">N</text><text x="213.2" y="987.5" text-anchor="middle">D</text><text x="253.2" y="987.5" text-anchor="middle">10</text><text x="303.2" y="987.5" text-anchor="middle">F</text><text x="343.2" y="987.5" text-anchor="middle">M</text><text x="383.2" y="987.5" text-anchor="middle">A</text><text x="433.2" y="987.5" text-anchor="middle">M</text><text x="473.2" y="987.5" text-anchor="middle">J</text><text x="513.2" y="987.5" text-anchor="middle">J</text><text x="563.2" y="987.5" text-anchor="middle">A</text><text x="603.2" y="987.5" text-anchor="middle">S</text><text x="643.2" y="987.5" text-anchor="middle">O</text><text x="693.2" y="987.5" text-anchor="middle">N</text><text x="733.2" y="987.5" text-anchor="middle">D</text><text x="783.2" y="987.5" text-anchor="middle">11</text><text x="823.2" y="987.5" text-anchor="middle">F</text><text x="863.2" y="987.5" text-anchor="middle">M</text><text x="903.2" y="987.5" text-anchor="middle">A</text><text x="953.2" y="987.5" text-anchor="middle">M</text><text x="993.2" y="987.5" text-anchor="middle">J</text><text x="1033.2" y="987.5" text-anchor="middle">J</text><text x="1083.2" y="987.5" text-anchor="middle">A</text><text x="1123.2" y="987.5" text-anchor="middle">S</text><text x="1173.2" y="987.5" text-anchor="middle">O</text><text x="1213.2" y="987.5" text-anchor="middle">N</text><text x="1253.2" y="987.5" text-anchor="middle">D</text><text x="1303.2" y="987.5" text-anchor="middle">12</text><text x="1343.2" y="987.5" text-anchor="middle">F</text><text x="1383.2" y="987.5" text-anchor="middle">M</text></g><path d="M1411.5 152L1418 145H1461V159H1418Z" fill="#000"/><text x="1420" y="155.6" font-family="Liberation Sans" font-size="11" letter-spacing="-0.2" fill="#fff">1405.00</text><g font-family="Liberation Sans" font-size="11" fill="#000" shape-rendering="geometricPrecision"><text x="3" y="60">ValueAlerts(ES 03-12 (Weekly),Alert4.wav,14,True,,ValueAlerts(SM),0,0.2,-8), ValueBands(ES 03-12 (Weekly),14,0.2)</text><text x="3" y="637">ValueBars(ES 03-12 (Weekly),14,0.2)</text><text x="3" y="827">ValueCharts(ES 03-12 (Weekly),14,0.2)</text><text x="3" y="969" letter-spacing="-0.16">© 2012 NinjaTrader, LLC</text></g></svg><div id="title" class="a"><svg class="a" style="left:3px;top:2px" width="14" height="14"><rect x="0.5" y="0.5" width="13" height="13" fill="#e8eef8" stroke="#8090b0"/><path d="M3 1V13M6 1V13M9 1V13M1 4H13M1 7H13M1 10H13" stroke="#c0c8d8" stroke-width="0.6"/><path d="M1 11L5 6L8 8L13 2" stroke="#1060e0" stroke-width="1.4" fill="none"/><path d="M1 7L4 4L8 5L13 1" stroke="#20b020" stroke-width="1.2" fill="none"/></svg><div class="a t">ES 03-12 (Weekly)&nbsp; Week 29/2009 - Week 11/2012</div><div class="a" style="left:1404px;top:4px;width:10px;height:10px;background:#D4D0C8;font-size:10.5px;line-height:12px;text-align:center;font-weight:normal;-webkit-text-stroke:0.3px #000">L</div><div class="a cb" style="left:1420px;top:2px;width:15px;height:14px"></div><div class="a" style="left:1424px;top:11px;width:6px;height:2px;background:#000"></div><div class="a cb" style="left:1436px;top:2px;width:16px;height:14px"></div><svg class="a" style="left:1439px;top:4px" width="10" height="9" shape-rendering="crispEdges"><path d="M3 .5H8.5V5.5M3 1.5H8.5" stroke="#000" fill="none"/><rect x="1" y="3.5" width="5" height="5" fill="none" stroke="#000"/><path d="M1 4.5H6" stroke="#000"/></svg><div class="a cb" style="left:1454px;top:2px;width:16px;height:14px"></div><svg class="a" style="left:1458px;top:5px" width="8" height="7"><path d="M0.5 0.5L7 6.5M7 0.5L0.5 6.5" stroke="#000" stroke-width="1.6"/></svg></div><div id="tb" class="a"><svg class="a" style="left:0;top:0" width="420" height="26"><defs><linearGradient id="gg" x1="0" x2="1"><stop offset="0" stop-color="#2c9a10"/><stop offset=".5" stop-color="#8cf060"/><stop offset="1" stop-color="#2c9a10"/></linearGradient><linearGradient id="rg" x1="0" x2="1"><stop offset="0" stop-color="#c01010"/><stop offset=".5" stop-color="#ff8070"/><stop offset="1" stop-color="#c01010"/></linearGradient><radialGradient id="lens" cx=".4" cy=".4" r=".6"><stop offset="0" stop-color="#e8f4ff"/><stop offset="1" stop-color="#6aa8e0"/></radialGradient><linearGradient id="cg" x1="0" y1="0" x2="0" y2="1"><stop offset="0" stop-color="#f4f4f4"/><stop offset="1" stop-color="#b8b8b8"/></linearGradient></defs><path d="M3 6V22" stroke="#9a9a9a" stroke-width="1.2" stroke-dasharray="1.5 2"/><path d="M10.5 5V21M134.5 5V21M244.5 5V21M302.5 5V21" stroke="#b0aca8" stroke-width="1"/><path d="M67 12H73L70 15Z M120 12H126L123 15Z M157 12.3H163L160 15.3Z M186 12.3H192L189 15.3Z M267 12.3H273L270 15.3Z" fill="#000"/><rect x="139.8" y="5.2" width="4" height="15" rx="2" fill="#111"/><rect x="140.3" y="7" width="3" height="11.5" fill="url(#gg)"/><rect x="144.8" y="5.2" width="4" height="15" rx="2" fill="#111"/><rect x="145.3" y="7" width="3" height="11.5" fill="url(#gg)"/><rect x="149.9" y="5.2" width="4" height="15" rx="2" fill="#111"/><rect x="150.4" y="7" width="3" height="11.5" fill="url(#rg)"/><path d="M169.3 19.8L170.6 15.2L180.6 5.8L183.4 8.6L173.8 18.4Z" fill="#f8d820" stroke="#9a7810" stroke-width="0.8" stroke-linejoin="round"/><path d="M169.3 19.8L170.3 16.6L172.4 18.7Z" fill="#555"/><path d="M180.4 6L183.2 8.8L184 8L181.2 5.2Z" fill="#e04040" stroke="#b02020" stroke-width="0.8"/><path d="M202.3 16L198.6 19.8" stroke="#303030" stroke-width="2" stroke-linecap="round"/><circle cx="205.5" cy="12.8" r="4" fill="url(#lens)" stroke="#a0a0a8" stroke-width="1.3"/><path d="M208 9H214M211 6V12" stroke="#10b010" stroke-width="2"/><path d="M225.1 16L221.5 19.8" stroke="#c0c0c0" stroke-width="2" stroke-linecap="round"/><circle cx="228.3" cy="12.8" r="4" fill="#d8d8d8" stroke="#c8c8c8" stroke-width="1.3"/><path d="M231.5 9H237" stroke="#c0c0c0" stroke-width="1.8"/><path d="M250.8 6.2L251 14.5L253.3 12.4L258.8 19.8L261 18.2L255.5 10.9L258.6 10.3Z" fill="#fff" stroke="#222" stroke-width="0.9" stroke-linejoin="round"/><rect x="280.5" y="5.5" width="13" height="14.5" fill="#fafafa" stroke="#707070"/><path d="M283.5 15.5L280.5 19.5" stroke="#333" stroke-width="1.8"/><circle cx="286" cy="13" r="3.8" fill="url(#lens)" stroke="#a0a0a8"/><path d="M308 5.5H314L316 6.9L314 8.4H308Z" fill="#40c030"/><path d="M308 13H314L316 14.5L314 16H308Z" fill="#d83020"/><path d="M316 7.5H324M316 10H324M316 12.5H324M316 17.5H324" stroke="#c8c8c8" stroke-width="0.6"/><rect x="317.2" y="7" width="2.4" height="13.3" fill="url(#gg)"/><rect x="320.6" y="13" width="2.4" height="7.3" fill="url(#rg)"/><rect x="331.5" y="5.5" width="15" height="14.8" fill="url(#cg)" stroke="#606060"/><path d="M333 9H346M333 12H346M333 15H346M333 18H346" stroke="#d8d8d8" stroke-width="0.6"/><path d="M335.5 6.5V19.5M339.5 6V17M343.5 8V20" stroke="#111" stroke-width="1"/><rect x="334.2" y="8.5" width="2.6" height="8" fill="url(#gg)"/><rect x="338.2" y="7.5" width="2.6" height="7" fill="url(#gg)"/><rect x="342.2" y="10" width="2.6" height="8" fill="url(#rg)"/><rect x="354.5" y="5.5" width="15.3" height="14.8" fill="url(#cg)" stroke="#707070"/><path d="M356 12L358.5 9.5L361 11L364 8L368 10" stroke="#30a040" fill="none" stroke-width="0.9"/><path d="M356 15L359 13L362 14L365 12L368 14.5" stroke="#e03030" fill="none" stroke-width="0.9"/><path d="M379.5 6.5H387.5L391 10V20.5H379.5Z" fill="#fff" stroke="#808080"/><path d="M387.5 6.5V10H391" fill="none" stroke="#a0a0a0" stroke-width="0.8"/><text x="381" y="18.8" font-family="Liberation Sans" font-weight="bold" font-size="12" fill="#20a030">$</text><rect x="401.5" y="5.5" width="13.3" height="14.8" fill="#f6f8ff" stroke="#808090"/><rect x="403" y="7" width="10.5" height="2.6" fill="#5a90d8"/><rect x="403" y="11" width="2.6" height="8" fill="#9860d8"/><path d="M407 12H413M407 14.5H413M407 17H413" stroke="#c0c4d0" stroke-width="0.8"/></svg><div class="a" style="left:17px;top:7px;font-size:11px;letter-spacing:-0.42px">ES 03-12</div><div class="a" style="left:81px;top:7px;font-size:11px;letter-spacing:-0.33px">Weekly</div></div><div id="sb" class="a"></div><div class="a cb" style="left:0;top:998px;width:16px;height:24px"></div><svg class="a" style="left:5px;top:1006px" width="5" height="8"><path d="M4 0V8L0 4Z" fill="#000"/></svg><div class="a" style="left:568px;top:998px;width:887px;height:24px;background:#D4D0C8;border-bottom:1px solid #404040;box-shadow:inset 1px 1px #fff"></div><div class="a cb" style="left:1455px;top:998px;width:17px;height:24px"></div><svg class="a" style="left:1462px;top:1006px" width="5" height="8"><path d="M0 0V8L4 4Z" fill="#000"/></svg><div id="task" class="a"><div class="a tbtn" style="left:2px;width:52px;font-weight:bold;padding-left:19px;font-size:12.5px">Start</div><svg class="a" style="left:4px;top:6px" width="16" height="15"><path d="M2.6 1.2Q4.7 0 7.2 1L6.5 6Q4.2 5 1.8 6.2Z" fill="#f0641e"/><path d="M8 1.5Q10.7 2.6 13.6 1.6L12.8 6.6Q10.1 7.6 7.3 6.5Z" fill="#70b820"/><path d="M1.6 7Q4.1 5.8 6.3 6.8L5.6 11.8Q3.1 10.8 0.7 12Z" fill="#3a78e8"/><path d="M7.1 7.3Q9.8 8.4 12.7 7.4L11.9 12.4Q9.1 13.4 6.4 12.3Z" fill="#f4c020"/></svg><div class="a tbtn" style="left:59px;width:160px">Total Commander 7.03 - ...</div><div class="a tbtn" style="left:222px;width:160px">Program</div><div class="a tbtn" style="left:385px;width:160px">Control Panel</div><div class="a tbtn" style="left:548px;width:160px">NinjaTrader 7 lic.emu v5.06</div><div class="a tbtn" style="left:711px;width:160px">Control Center - Untitled1</div><div class="a tbtn" style="left:874px;width:160px">ES 03-12 (Weekly)&nbsp; Wee...</div><div class="a tbtn on" style="left:1037px;width:160px">Indicators</div><svg class="a" style="left:63px;top:6px" width="16" height="16"><path d="M0.5 0.5H13.5L15.5 2.5V15.5H0.5Z" fill="#2a56d8" stroke="#1a3aa8"/><rect x="4" y="1" width="6.5" height="4" fill="#e4e4ec"/><rect x="7.5" y="1.6" width="2" height="2.8" fill="#2a56d8"/><rect x="2" y="8" width="12" height="7" fill="#fff"/><path d="M3 10H13M3 12H13" stroke="#e04040" stroke-width="0.9"/><rect x="2" y="13.5" width="12" height="1.5" fill="#c03040"/></svg><svg class="a" style="left:226px;top:7px" width="16" height="14"><defs><linearGradient id="fo" x1="0" y1="0" x2="0" y2="1"><stop offset="0" stop-color="#fff2b0"/><stop offset="1" stop-color="#e0b020"/></linearGradient></defs><path d="M1 2.5Q1 1.5 2 1.5H5.5L7 3H12.5Q13.5 3 13.5 4V11.5Q13.5 12.5 12.5 12.5H2Q1 12.5 1 11.5Z" fill="#f0c840" stroke="#b08810" stroke-width="0.8"/><path d="M2.5 6Q2.8 5 4 5H14.5Q15.5 5 15.2 6L13.8 11.8Q13.5 12.5 12.5 12.5H2Q1 12.5 1.3 11.5Z" fill="url(#fo)" stroke="#b08810" stroke-width="0.8"/></svg><svg class="a" style="left:388px;top:6px" width="16" height="16"><path d="M3.5 2L11 0.8L10.5 13.5L2.5 15Z" fill="#2860d0"/><path d="M4.5 3L10 2.2L9.6 12.6L3.8 13.6Z" fill="#e8f0ff"/><path d="M5 8.5L6.5 10.5L9 6" stroke="#e0a020" stroke-width="1.4" fill="none"/><path d="M10 9L14.5 5" stroke="#3050a0" stroke-width="1.5"/><path d="M14 5.5L15.2 4.3" stroke="#e03030" stroke-width="1.5"/></svg><svg class="a" style="left:553px;top:9px" width="16" height="13"><path d="M7 0.8Q1.5 1.5 1 6.5Q1 11 5 12.5Q2.8 9 3.6 5.5Q4.5 2.2 8.5 1Z" fill="#9a8478"/><path d="M5.5 3.5Q7.5 6 9 11.5L10.3 11.5Q9 5.5 6.5 3Z" fill="#c0b0a8"/><path d="M9.2 11.8L14.8 3.2L13.2 3L9.6 8.6Q9.5 6 8.2 4.2Z" fill="#d42020"/><path d="M14.5 4Q15.5 9 11 12.5Q13.5 8.5 13.5 4.5Z" fill="#e06060"/></svg><svg class="a" style="left:716px;top:9px" width="16" height="13"><path d="M7 0.8Q1.5 1.5 1 6.5Q1 11 5 12.5Q2.8 9 3.6 5.5Q4.5 2.2 8.5 1Z" fill="#9a8478"/><path d="M5.5 3.5Q7.5 6 9 11.5L10.3 11.5Q9 5.5 6.5 3Z" fill="#c0b0a8"/><path d="M9.2 11.8L14.8 3.2L13.2 3L9.6 8.6Q9.5 6 8.2 4.2Z" fill="#d42020"/><path d="M14.5 4Q15.5 9 11 12.5Q13.5 8.5 13.5 4.5Z" fill="#e06060"/></svg><svg class="a" style="left:1042px;top:9px" width="16" height="13"><path d="M7 0.8Q1.5 1.5 1 6.5Q1 11 5 12.5Q2.8 9 3.6 5.5Q4.5 2.2 8.5 1Z" fill="#9a8478"/><path d="M5.5 3.5Q7.5 6 9 11.5L10.3 11.5Q9 5.5 6.5 3Z" fill="#c0b0a8"/><path d="M9.2 11.8L14.8 3.2L13.2 3L9.6 8.6Q9.5 6 8.2 4.2Z" fill="#d42020"/><path d="M14.5 4Q15.5 9 11 12.5Q13.5 8.5 13.5 4.5Z" fill="#e06060"/></svg><svg class="a" style="left:878px;top:6px" width="16" height="16"><rect x="0.5" y="0.5" width="15" height="15" fill="#e8eef8" stroke="#8090b0"/><path d="M1 13L5 8L9 10L15 3" stroke="#1060e0" stroke-width="1.4" fill="none"/><path d="M1 9L5 5L9 6L15 1" stroke="#20b020" stroke-width="1.2" fill="none"/></svg><div class="a" style="left:1363px;top:8px;width:16px;height:15px;background:#0a246a;color:#fff;font-size:10px;line-height:15px;text-align:center">EN</div><div class="a" style="left:1383px;top:3px;width:2px;height:25px;border-left:1px solid #808080;border-right:1px solid #fff"></div><div class="a" style="left:1389px;top:3px;width:81px;height:25px;border-top:1px solid #808080;border-left:1px solid #808080;border-right:1px solid #fff;border-bottom:1px solid #fff"></div><div class="a" style="left:1393px;top:7px;width:16px;height:16px;background:linear-gradient(135deg,#8cc4f4,#4a88d0);box-shadow:inset -1px -1px #3a6aa8;color:#fff;font-style:italic;font-size:13px;line-height:16px;text-align:center">M</div><svg class="a" style="left:1411px;top:7px" width="18" height="16"><path d="M10 11Q13 10 14 7M9 13Q14 12 15.5 8M8 15Q15 14 17 9" stroke="#8080e0" fill="none" stroke-width="0.8"/><circle cx="6.5" cy="6.5" r="5" fill="#808080" stroke="#404040"/><circle cx="5.8" cy="5.8" r="2.2" fill="#b0b0b0"/></svg><div class="a" style="left:1433px;top:8px;font-size:11px;letter-spacing:0.17px">22:54</div></div><div id="dlg" class="a"><div class="a" style="left:3px;top:3px;width:570px;height:15px;background:#0A246A"></div><div class="a" style="left:5px;top:3px;color:#fff;font-weight:bold;font-size:11px;line-height:16px;letter-spacing:0.57px">Indicators</div><div class="a cb" style="left:561px;top:5px;width:10px;height:11px"></div><svg class="a" style="left:563px;top:8px" width="7" height="6"><path d="M0.5 0.5L6 5.5M6 0.5L0.5 5.5" stroke="#000" stroke-width="1.1"/></svg><div class="a sunk" style="left:4px;top:20px;width:253px;height:213px;background:#fff;overflow:hidden"><div class="li" style="top:3px;left:5px">TMA</div><div class="li" style="top:16px;left:5px">TRIX</div><div class="li" style="top:29px;left:5px">TSF</div><div class="li" style="top:42px;left:5px">TSI</div><div class="li" style="top:55px;left:5px">TSS</div><div class="li" style="top:68px;left:5px">UltimateOscillator</div><div class="li" style="top:81px;left:5px">ValueAlerts</div><div class="li" style="top:94px;left:5px">ValueBands</div><div class="li" style="top:107px;left:5px">ValueBars</div><div class="li" style="top:120px;left:5px">ValueCharts</div><div class="li" style="top:133px;left:5px">ValueChartsPriceActionProfile</div><div class="li" style="top:146px;left:5px">ValueChartsScanner</div><div class="li" style="top:159px;left:5px">ValueChartsSignalBars</div><div class="li" style="top:172px;left:5px">ValueFlag</div><div class="li" style="top:185px;left:5px">ValueLevels</div><div class="li" style="top:198px;left:5px">ViperLines</div><div class="a" style="left:232px;top:2px;width:17px;height:207px;background-color:#eeece8;background-image:repeating-conic-gradient(#D4D0C8 0 25%,#fff 0 50%);background-size:2px 2px"></div><div class="a cb" style="left:232px;top:2px;width:17px;height:16px"></div><div class="a cb" style="left:232px;top:193px;width:17px;height:16px"></div><div class="a cb" style="left:232px;top:172px;width:17px;height:8px"></div><svg class="a" style="left:237px;top:7px" width="8" height="5"><path d="M4 0L7.5 4H0.5Z" fill="#000"/></svg><svg class="a" style="left:237px;top:199px" width="8" height="5"><path d="M0.5 0H7.5L4 4Z" fill="#000"/></svg></div><div class="a sunk" style="left:5px;top:238px;width:251px;height:121px;background:#fff;overflow:hidden"><div class="li" style="top:2px;left:2px">ValueAlerts(ES 03-12 (Weekly),Alert4.wav,14,True,,ValueAlerts(SM),0,0.2,-8)</div><div class="li" style="top:15px;left:2px">ValueBands(ES 03-12 (Weekly),14,0.2)</div><div class="li" style="top:28px;left:2px">ValueBars(ES 03-12 (Weekly),14,0.2)</div><div class="a" style="left:1px;top:41px;width:247px;height:13px;background:#0A246A"></div><div class="li" style="top:41px;left:2px;color:#fff">ValueCharts(ES 03-12 (Weekly),14,0.2)</div></div><div class="a" style="left:3px;top:19px;width:2px;height:387px;background:#808080;box-shadow:1px 0 #404040"></div><div class="a" style="left:3px;top:405px;width:571px;height:1px;background:#fff"></div><div class="a btn" style="left:27px;top:374px;width:68px;height:25px;color:#808080;text-shadow:1px 1px #fff">New</div><div class="a btn" style="left:164px;top:374px;width:68px;height:25px">Remove</div><div class="a btn" style="left:91px;top:434px;width:81px;height:25px">OK</div><div class="a btn" style="left:248px;top:434px;width:81px;height:25px;border:1px solid #000;box-shadow:inset 1px 1px #fff,inset -1px -1px #404040,inset -2px -2px #808080">Apply</div><div class="a btn" style="left:405px;top:434px;width:81px;height:25px">Close</div><div class="a sunk" style="left:312px;top:19px;width:259px;height:323px;background:#fff;overflow:hidden"><div class="pr" style="top:3px;background:#D4D0C8;border-top:2px solid #D4D0C8;margin-top:-2px;height:18px"><svg class="a" style="left:2px;top:3px" width="9" height="9" shape-rendering="crispEdges"><rect x="0.5" y="0.5" width="8" height="8" fill="#fff" stroke="#000"/><path d="M2 4.5H7" stroke="#000"/></svg><b class="a" style="left:17px;top:0">Parameters</b></div><div class="pr" style="top:19px;background:#D4D0C8"><div class="a" style="left:14px;top:0;width:107px;height:15px;background:#fff;overflow:hidden;color:#000;padding-left:3px">AnalysisPeriod</div><div class="a" style="left:122px;top:0;width:136px;height:15px;background:#fff;overflow:hidden;color:#000;padding-left:3px;font-weight:bold;letter-spacing:0.37px">14</div></div><div class="pr" style="top:35px;background:#D4D0C8"><div class="a" style="left:14px;top:0;width:107px;height:15px;background:#fff;overflow:hidden;color:#000;padding-left:3px">ScalingMultiplier</div><div class="a" style="left:122px;top:0;width:136px;height:15px;background:#fff;overflow:hidden;color:#000;padding-left:3px;font-weight:bold;letter-spacing:0.37px">0.2</div></div><div class="pr" style="top:51px;background:#D4D0C8;"><svg class="a" style="left:2px;top:3px" width="9" height="9" shape-rendering="crispEdges"><rect x="0.5" y="0.5" width="8" height="8" fill="#fff" stroke="#000"/><path d="M2 4.5H7" stroke="#000"/></svg><b class="a" style="left:17px;top:0">Data</b></div><div class="pr" style="top:67px;background:#D4D0C8"><div class="a" style="left:14px;top:0;width:107px;height:15px;background:#fff;overflow:hidden;color:#000;padding-left:3px">Calculate on bar close</div><div class="a" style="left:122px;top:0;width:136px;height:15px;background:#fff;overflow:hidden;color:#000;padding-left:3px;font-weight:bold;letter-spacing:0.37px">True</div></div><div class="pr" style="top:83px;background:#D4D0C8"><div class="a" style="left:14px;top:0;width:107px;height:15px;background:#fff;overflow:hidden;color:#000;padding-left:3px">Input series</div><div class="a" style="left:122px;top:0;width:136px;height:15px;background:#fff;overflow:hidden;color:#000;padding-left:3px;font-weight:bold;letter-spacing:0.37px">ES 03-12 (Weekly)</div></div><div class="pr" style="top:99px;background:#D4D0C8"><div class="a" style="left:14px;top:0;width:107px;height:15px;background:#fff;overflow:hidden;color:#000;padding-left:3px">Maximum bars look back</div><div class="a" style="left:122px;top:0;width:136px;height:15px;background:#fff;overflow:hidden;color:#000;padding-left:3px;font-weight:bold;letter-spacing:0.37px">TwoHundredFiftySix</div></div><div class="pr" style="top:115px;background:#D4D0C8;"><svg class="a" style="left:2px;top:3px" width="9" height="9" shape-rendering="crispEdges"><rect x="0.5" y="0.5" width="8" height="8" fill="#fff" stroke="#000"/><path d="M2 4.5H7" stroke="#000"/></svg><b class="a" style="left:17px;top:0">Visual</b></div><div class="pr" style="top:131px;background:#D4D0C8"><div class="a" style="left:14px;top:0;width:107px;height:15px;background:#fff;overflow:hidden;color:#808080;padding-left:3px">Auto scale</div><div class="a" style="left:122px;top:0;width:136px;height:15px;background:#fff;overflow:hidden;color:#808080;padding-left:3px;font-weight:bold;letter-spacing:0.37px">True</div></div><div class="pr" style="top:147px;background:#D4D0C8"><div class="a" style="left:14px;top:0;width:107px;height:15px;background:#fff;overflow:hidden;color:#000;padding-left:3px">Displacement</div><div class="a" style="left:122px;top:0;width:136px;height:15px;background:#fff;overflow:hidden;color:#000;padding-left:3px;font-weight:bold;letter-spacing:0.37px">0</div></div><div class="pr" style="top:163px;background:#D4D0C8"><div class="a" style="left:14px;top:0;width:107px;height:15px;background:#fff;overflow:hidden;color:#000;padding-left:3px">Display in Data Box</div><div class="a" style="left:122px;top:0;width:136px;height:15px;background:#fff;overflow:hidden;color:#000;padding-left:3px;font-weight:bold;letter-spacing:0.37px">False</div></div><div class="pr" style="top:179px;background:#D4D0C8"><div class="a" style="left:14px;top:0;width:107px;height:15px;background:#D4D0C8;overflow:hidden;color:#000;padding-left:3px">Label</div><div class="a" style="left:122px;top:0;width:136px;height:15px;background:#fff;overflow:hidden;color:#000;padding-left:3px;font-weight:bold;letter-spacing:0.37px">ValueCharts</div></div><div class="pr" style="top:195px;background:#D4D0C8"><div class="a" style="left:14px;top:0;width:107px;height:15px;background:#fff;overflow:hidden;color:#000;padding-left:3px">Panel</div><div class="a" style="left:122px;top:0;width:136px;height:15px;background:#fff;overflow:hidden;color:#000;padding-left:3px;font-weight:bold;letter-spacing:0.37px">3</div></div><div class="pr" style="top:211px;background:#D4D0C8"><div class="a" style="left:14px;top:0;width:107px;height:15px;background:#fff;overflow:hidden;color:#000;padding-left:3px">Price marker(s)</div><div class="a" style="left:122px;top:0;width:136px;height:15px;background:#fff;overflow:hidden;color:#000;padding-left:3px;font-weight:bold;letter-spacing:0.37px">False</div></div><div class="pr" style="top:227px;background:#D4D0C8"><div class="a" style="left:14px;top:0;width:107px;height:15px;background:#fff;overflow:hidden;color:#000;padding-left:3px">Scale justification</div><div class="a" style="left:122px;top:0;width:136px;height:15px;background:#fff;overflow:hidden;color:#000;padding-left:3px;font-weight:bold;letter-spacing:0.37px">Right</div></div></div><div class="a" style="left:312px;top:345px;width:259px;height:59px;border:1px solid #808080;box-shadow:inset 1px 1px #fff"></div><div class="a" style="left:317px;top:349px;font-weight:bold;font-size:11.5px;letter-spacing:0.3px">Label</div><div class="a" style="left:317px;top:364px;font-size:11px;line-height:13px;width:240px;letter-spacing:-0.14px">Enter the description of your new custom<br>indicator here</div><svg class="a" style="left:560px;top:459px" width="13" height="13"><path d="M12 1L1 12M12 5L5 12M12 9L9 12" stroke="#808080" stroke-width="1"/><path d="M12 2L2 12M12 6L6 12M12 10L10 12" stroke="#fff" stroke-width="1"/></svg></div></body></html>
